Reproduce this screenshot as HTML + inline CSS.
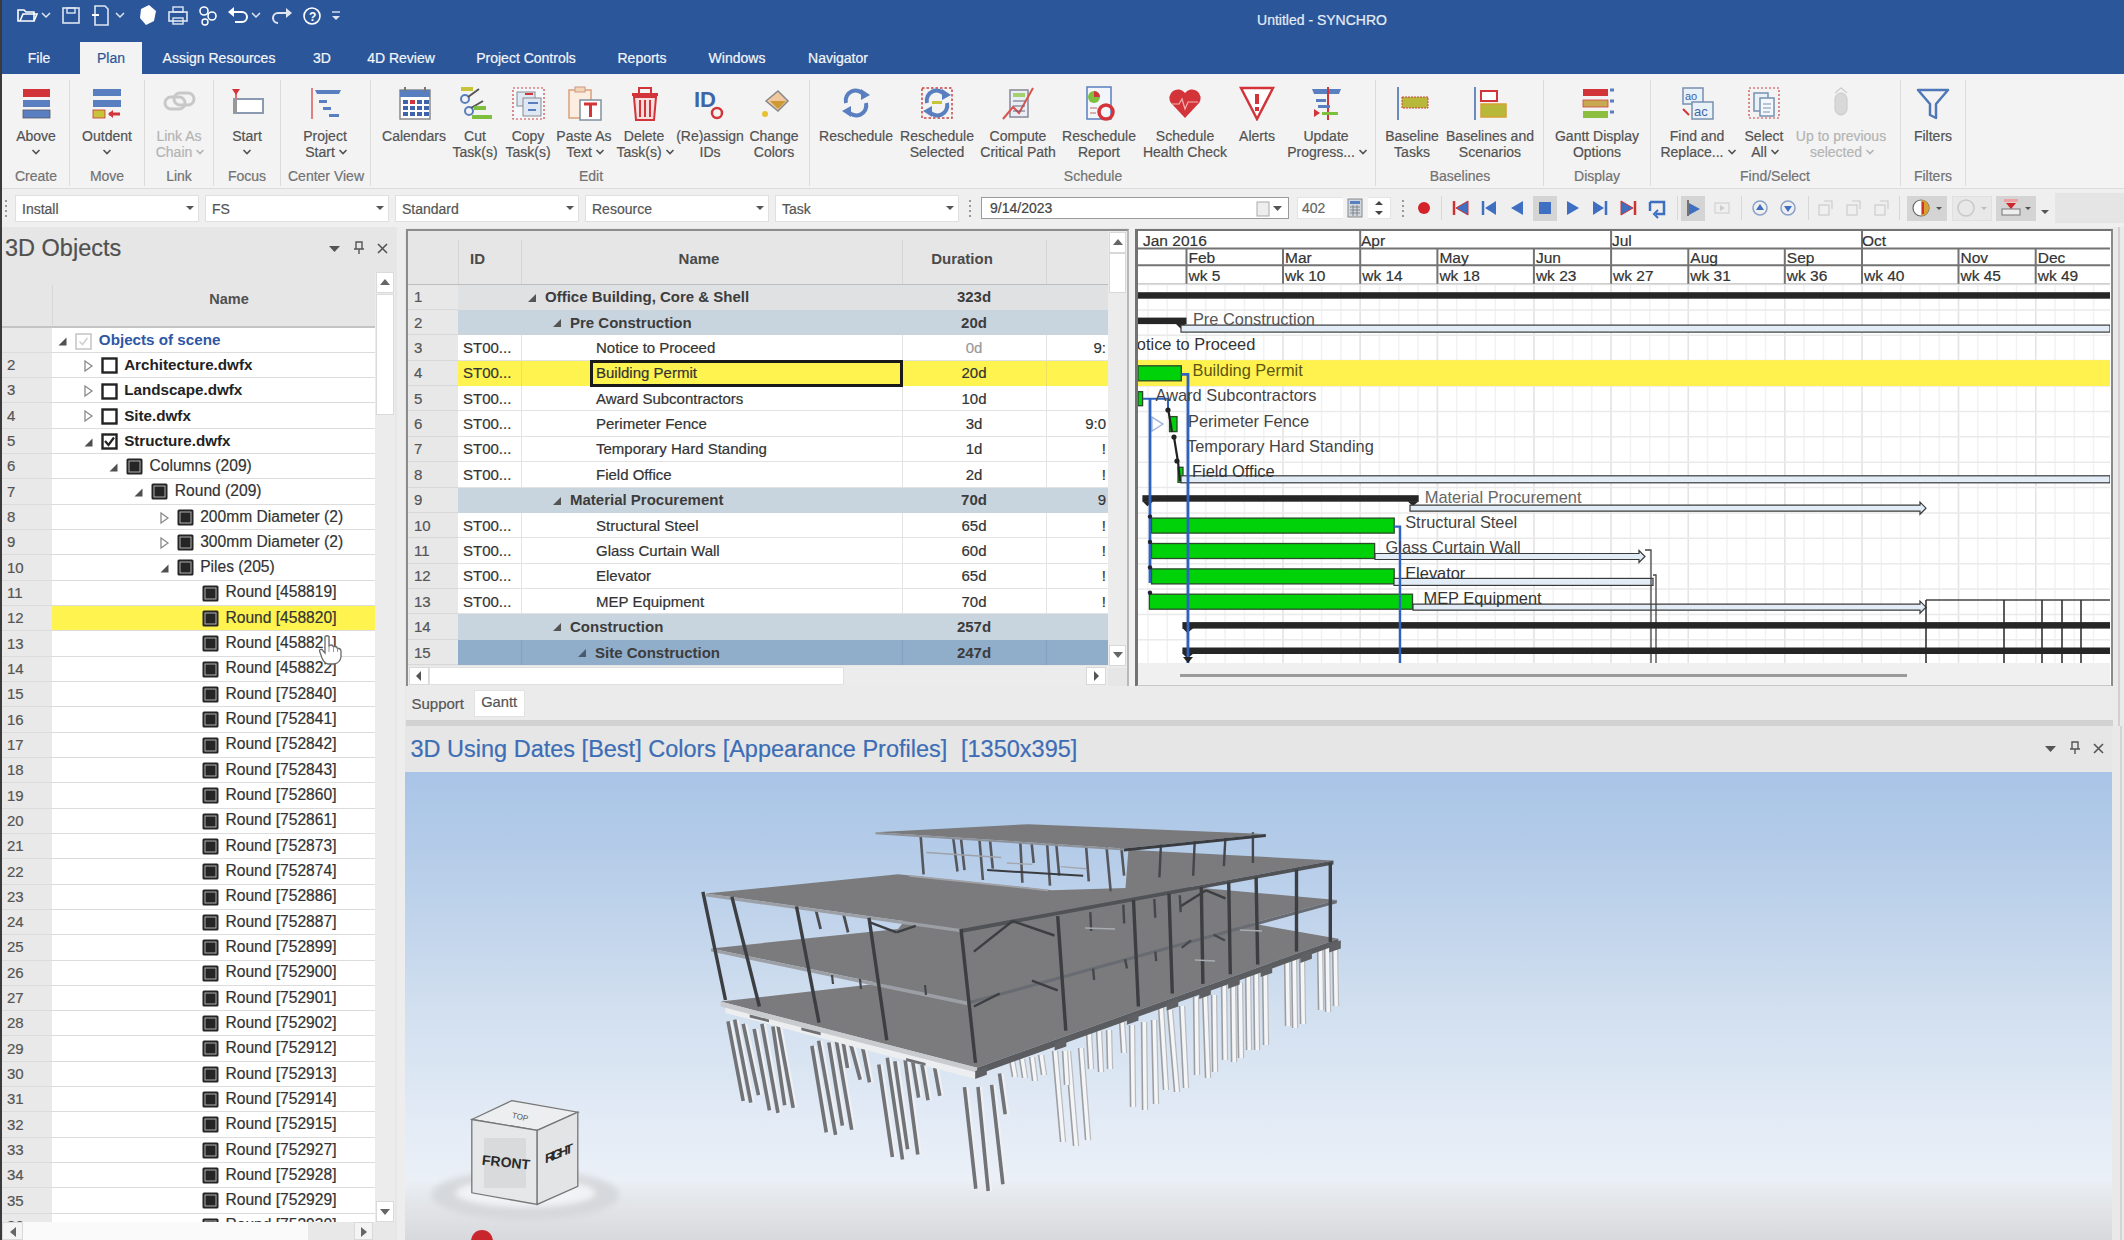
<!DOCTYPE html>
<html><head><meta charset="utf-8"><style>
html,body{margin:0;padding:0;width:2124px;height:1240px;overflow:hidden;background:#e6e6e6;}
body{position:relative;font-family:"Liberation Sans", sans-serif;}
div{position:absolute;box-sizing:border-box;}
.t{white-space:nowrap;line-height:1;}
.t.n{-webkit-text-stroke:0.2px currentColor;}
</style></head><body>
<div style="left:0px;top:0px;width:2124px;height:74px;background:#2b579a;"></div>
<div style="left:0px;top:0px;width:1.5px;height:1240px;background:#3a3a3a;z-index:50;"></div>
<div class="t n" style="left:922px;width:800px;text-align:center;top:12.75px;font-size:14px;color:#e6edf6;font-weight:normal;">Untitled - SYNCHRO</div>
<svg style="position:absolute;left:15px;top:3px;" width="24" height="26" viewBox="0 0 24 26"><path d="M3 7 L9 7 L11 9 L19 9 L19 18 L3 18 Z" fill="none" stroke="#fff" stroke-width="1.6"/><path d="M5 18 L8 11 L22 11 L19 18" fill="none" stroke="#fff" stroke-width="1.6"/></svg>
<svg style="position:absolute;left:60px;top:3px;" width="24" height="26" viewBox="0 0 24 26"><rect x="3" y="5" width="16" height="15" fill="none" stroke="#dfe6f2" stroke-width="1.6"/><rect x="7" y="5" width="8" height="5" fill="none" stroke="#dfe6f2" stroke-width="1.4"/></svg>
<svg style="position:absolute;left:90px;top:3px;" width="24" height="26" viewBox="0 0 24 26"><path d="M5 3 L15 3 L18 6 L18 22 L5 22 Z" fill="none" stroke="#dfe6f2" stroke-width="1.6"/><path d="M2 12 L9 12" stroke="#fff" stroke-width="2"/></svg>
<svg style="position:absolute;left:136px;top:3px;" width="24" height="26" viewBox="0 0 24 26"><path d="M5 6 L13 2 L20 8 L18 18 L10 22 L4 15 Z" fill="#fff"/></svg>
<svg style="position:absolute;left:166px;top:3px;" width="24" height="26" viewBox="0 0 24 26"><rect x="3" y="9" width="18" height="9" fill="none" stroke="#dfe6f2" stroke-width="1.6"/><rect x="7" y="4" width="10" height="5" fill="none" stroke="#dfe6f2" stroke-width="1.4"/><rect x="7" y="15" width="10" height="6" fill="none" stroke="#dfe6f2" stroke-width="1.4"/></svg>
<svg style="position:absolute;left:196px;top:3px;" width="24" height="26" viewBox="0 0 24 26"><circle cx="8" cy="8" r="4" fill="none" stroke="#fff" stroke-width="1.6"/><circle cx="16" cy="13" r="4" fill="none" stroke="#fff" stroke-width="1.6"/><circle cx="9" cy="19" r="3" fill="none" stroke="#fff" stroke-width="1.4"/></svg>
<svg style="position:absolute;left:226px;top:3px;" width="24" height="26" viewBox="0 0 24 26"><path d="M6 9 L16 9 A5 5 0 0 1 16 19 L9 19" fill="none" stroke="#fff" stroke-width="2"/><path d="M2 9 L8 4 L8 14 Z" fill="#fff"/></svg>
<svg style="position:absolute;left:270px;top:3px;" width="24" height="26" viewBox="0 0 24 26"><path d="M18 10 L8 10 A5 5 0 0 0 8 20" fill="none" stroke="#dfe6f2" stroke-width="2"/><path d="M22 10 L16 5 L16 15 Z" fill="#dfe6f2"/></svg>
<svg style="position:absolute;left:300px;top:3px;" width="24" height="26" viewBox="0 0 24 26"><circle cx="12" cy="13" r="8" fill="none" stroke="#fff" stroke-width="1.6"/><text x="9" y="18" font-family="Liberation Sans" font-size="12" font-weight="bold" fill="#fff">?</text></svg>
<svg style="position:absolute;left:40px;top:10px;" width="12" height="10" viewBox="0 0 12 10"><path d="M2 3 L6 7 L10 3" fill="none" stroke="#dfe6f2" stroke-width="1.5"/></svg>
<svg style="position:absolute;left:114px;top:10px;" width="12" height="10" viewBox="0 0 12 10"><path d="M2 3 L6 7 L10 3" fill="none" stroke="#dfe6f2" stroke-width="1.5"/></svg>
<svg style="position:absolute;left:250px;top:10px;" width="12" height="10" viewBox="0 0 12 10"><path d="M2 3 L6 7 L10 3" fill="none" stroke="#dfe6f2" stroke-width="1.5"/></svg>
<svg style="position:absolute;left:330px;top:9px;" width="12" height="14" viewBox="0 0 12 14"><path d="M2 3 L10 3" stroke="#dfe6f2" stroke-width="1.4"/><path d="M2 7 L6 11 L10 7 Z" fill="#dfe6f2"/></svg>
<div style="left:80px;top:42px;width:62px;height:33px;background:#f3f3f3;"></div>
<div class="t n" style="left:-361px;width:800px;text-align:center;top:51.15px;font-size:14px;color:#f4f6fa;font-weight:normal;">File</div>
<div class="t n" style="left:-289px;width:800px;text-align:center;top:51.15px;font-size:14px;color:#2b579a;font-weight:normal;">Plan</div>
<div class="t n" style="left:-181px;width:800px;text-align:center;top:51.15px;font-size:14px;color:#f4f6fa;font-weight:normal;">Assign Resources</div>
<div class="t n" style="left:-78px;width:800px;text-align:center;top:51.15px;font-size:14px;color:#f4f6fa;font-weight:normal;">3D</div>
<div class="t n" style="left:1px;width:800px;text-align:center;top:51.15px;font-size:14px;color:#f4f6fa;font-weight:normal;">4D Review</div>
<div class="t n" style="left:126px;width:800px;text-align:center;top:51.15px;font-size:14px;color:#f4f6fa;font-weight:normal;">Project Controls</div>
<div class="t n" style="left:242px;width:800px;text-align:center;top:51.15px;font-size:14px;color:#f4f6fa;font-weight:normal;">Reports</div>
<div class="t n" style="left:337px;width:800px;text-align:center;top:51.15px;font-size:14px;color:#f4f6fa;font-weight:normal;">Windows</div>
<div class="t n" style="left:438px;width:800px;text-align:center;top:51.15px;font-size:14px;color:#f4f6fa;font-weight:normal;">Navigator</div>
<div style="left:0px;top:74px;width:2124px;height:115px;background:#f3f3f3;"></div>
<div style="left:0px;top:188px;width:2124px;height:1px;background:#dcdcdc;"></div>
<div style="left:69px;top:80px;width:1px;height:106px;background:#dcdcdc;"></div>
<div style="left:144px;top:80px;width:1px;height:106px;background:#dcdcdc;"></div>
<div style="left:213px;top:80px;width:1px;height:106px;background:#dcdcdc;"></div>
<div style="left:280px;top:80px;width:1px;height:106px;background:#dcdcdc;"></div>
<div style="left:370px;top:80px;width:1px;height:106px;background:#dcdcdc;"></div>
<div style="left:809px;top:80px;width:1px;height:106px;background:#dcdcdc;"></div>
<div style="left:1375px;top:80px;width:1px;height:106px;background:#dcdcdc;"></div>
<div style="left:1543px;top:80px;width:1px;height:106px;background:#dcdcdc;"></div>
<div style="left:1650px;top:80px;width:1px;height:106px;background:#dcdcdc;"></div>
<div style="left:1900px;top:80px;width:1px;height:106px;background:#dcdcdc;"></div>
<div style="left:1965px;top:80px;width:1px;height:106px;background:#dcdcdc;"></div>
<svg style="position:absolute;left:18px;top:85px;" width="36" height="36" viewBox="0 0 36 36"><rect x="5" y="4" width="27" height="8" fill="#d2343a"/><rect x="5" y="15" width="27" height="7" fill="#5a7fc0"/><rect x="5" y="25" width="27" height="8" fill="#5a7fc0"/><rect x="5" y="25" width="27" height="8" fill="none" stroke="#556" stroke-width="0.8"/></svg>
<div class="t n" style="left:-364px;width:800px;text-align:center;top:128.65px;font-size:14px;color:#525252;font-weight:normal;">Above</div>
<svg style="position:absolute;left:31px;top:148px;" width="10" height="8" viewBox="0 0 10 8"><path d="M1.5 2 L5 5.5 L8.5 2" fill="none" stroke="#525252" stroke-width="1.6"/></svg>
<svg style="position:absolute;left:89px;top:85px;" width="36" height="36" viewBox="0 0 36 36"><rect x="4" y="4" width="28" height="7" fill="#5a7fc0"/><rect x="4" y="15" width="28" height="7" fill="#5a7fc0"/><rect x="4" y="25" width="12" height="8" fill="#c8c43a" stroke="#c33" stroke-width="0.8"/><path d="M20 29 L31 29" stroke="#d2343a" stroke-width="3"/><path d="M19 29 L24 25 L24 33 Z" fill="#d2343a"/></svg>
<div class="t n" style="left:-293px;width:800px;text-align:center;top:128.65px;font-size:14px;color:#525252;font-weight:normal;">Outdent</div>
<svg style="position:absolute;left:102px;top:148px;" width="10" height="8" viewBox="0 0 10 8"><path d="M1.5 2 L5 5.5 L8.5 2" fill="none" stroke="#525252" stroke-width="1.6"/></svg>
<svg style="position:absolute;left:161px;top:85px;" width="36" height="36" viewBox="0 0 36 36"><rect x="4" y="12" width="20" height="12" rx="6" fill="none" stroke="#c8c8c8" stroke-width="3"/><rect x="13" y="8" width="20" height="12" rx="6" fill="none" stroke="#c8c8c8" stroke-width="3"/></svg>
<div class="t n" style="left:-221px;width:800px;text-align:center;top:128.65px;font-size:14px;color:#b4b4b4;font-weight:normal;">Link As</div>
<div class="t n" style="left:-226px;width:800px;text-align:center;top:145.15px;font-size:14px;color:#b4b4b4;font-weight:normal;">Chain</div>
<svg style="position:absolute;left:195.28125px;top:148px;" width="10" height="8" viewBox="0 0 10 8"><path d="M1.5 2 L5 5.5 L8.5 2" fill="none" stroke="#b4b4b4" stroke-width="1.6"/></svg>
<svg style="position:absolute;left:229px;top:85px;" width="36" height="36" viewBox="0 0 36 36"><rect x="5" y="14" width="29" height="14" fill="#fff" stroke="#8a9ab0" stroke-width="2"/><path d="M7 4 L7 28" stroke="#e07070" stroke-width="2"/><path d="M3 4 L11 4 L7 10 Z" fill="#d2343a"/><rect x="5" y="14" width="3" height="14" fill="#999"/></svg>
<div class="t n" style="left:-153px;width:800px;text-align:center;top:128.65px;font-size:14px;color:#525252;font-weight:normal;">Start</div>
<svg style="position:absolute;left:242px;top:148px;" width="10" height="8" viewBox="0 0 10 8"><path d="M1.5 2 L5 5.5 L8.5 2" fill="none" stroke="#525252" stroke-width="1.6"/></svg>
<svg style="position:absolute;left:307px;top:85px;" width="36" height="36" viewBox="0 0 36 36"><path d="M5 3 L5 34" stroke="#e08080" stroke-width="2"/><path d="M8 5 L34 5 L32 9 L10 9 Z" fill="#5a7fc0"/><rect x="12" y="15" width="8" height="3" fill="#5a7fc0"/><rect x="16" y="22" width="8" height="3" fill="#5a7fc0"/><rect x="22" y="29" width="10" height="3" fill="#5a7fc0"/></svg>
<div class="t n" style="left:-75px;width:800px;text-align:center;top:128.65px;font-size:14px;color:#525252;font-weight:normal;">Project</div>
<div class="t n" style="left:-80px;width:800px;text-align:center;top:145.15px;font-size:14px;color:#525252;font-weight:normal;">Start</div>
<svg style="position:absolute;left:337.78125px;top:148px;" width="10" height="8" viewBox="0 0 10 8"><path d="M1.5 2 L5 5.5 L8.5 2" fill="none" stroke="#525252" stroke-width="1.6"/></svg>
<svg style="position:absolute;left:396px;top:85px;" width="36" height="36" viewBox="0 0 36 36"><rect x="4" y="5" width="30" height="29" fill="#fff" stroke="#8a8a8a" stroke-width="1.5"/><rect x="4" y="5" width="30" height="7" fill="#5a7fc0"/><path d="M9 2 L9 7 M29 2 L29 7" stroke="#777" stroke-width="2"/><rect x="7" y="15" width="5" height="4" fill="#3f64a8"/><rect x="14" y="15" width="5" height="4" fill="#d2343a"/><rect x="21" y="15" width="5" height="4" fill="#3f64a8"/><rect x="28" y="15" width="5" height="4" fill="#3f64a8"/><rect x="7" y="21" width="5" height="4" fill="#3f64a8"/><rect x="14" y="21" width="5" height="4" fill="#3f64a8"/><rect x="21" y="21" width="5" height="4" fill="#3f64a8"/><rect x="28" y="21" width="5" height="4" fill="#3f64a8"/><rect x="7" y="27" width="5" height="4" fill="#3f64a8"/><rect x="14" y="27" width="5" height="4" fill="#3f64a8"/><rect x="21" y="27" width="5" height="4" fill="#3f64a8"/><rect x="28" y="27" width="5" height="4" fill="#3f64a8"/></svg>
<div class="t n" style="left:14px;width:800px;text-align:center;top:128.65px;font-size:14px;color:#525252;font-weight:normal;">Calendars</div>
<svg style="position:absolute;left:457px;top:85px;" width="36" height="36" viewBox="0 0 36 36"><circle cx="8" cy="14" r="4" fill="none" stroke="#5a7fc0" stroke-width="2"/><circle cx="12" cy="26" r="4" fill="none" stroke="#5a7fc0" stroke-width="2"/><path d="M11 12 L22 4 M14 23 L26 16" stroke="#555" stroke-width="2"/><rect x="4" y="2" width="12" height="4" fill="#c8c43a"/><rect x="17" y="21" width="12" height="4" fill="#7fbf3f"/><rect x="15" y="30" width="20" height="4" fill="#7fbf3f"/></svg>
<div class="t n" style="left:75px;width:800px;text-align:center;top:128.65px;font-size:14px;color:#525252;font-weight:normal;">Cut</div>
<div class="t n" style="left:75px;width:800px;text-align:center;top:145.15px;font-size:14px;color:#525252;font-weight:normal;">Task(s)</div>
<svg style="position:absolute;left:510px;top:85px;" width="36" height="36" viewBox="0 0 36 36"><rect x="3" y="3" width="31" height="31" fill="#f4f8fc" stroke="#c44" stroke-width="1.2" stroke-dasharray="2 2"/><rect x="7" y="7" width="18" height="14" fill="#dde8f4" stroke="#8a8a8a"/><rect x="13" y="13" width="18" height="18" fill="#dde8f4" stroke="#8a8a8a"/><rect x="15" y="8" width="8" height="2" fill="#d2343a"/><rect x="18" y="17" width="10" height="2" fill="#5a7fc0"/><rect x="18" y="24" width="8" height="2" fill="#5a7fc0"/></svg>
<div class="t n" style="left:128px;width:800px;text-align:center;top:128.65px;font-size:14px;color:#525252;font-weight:normal;">Copy</div>
<div class="t n" style="left:128px;width:800px;text-align:center;top:145.15px;font-size:14px;color:#525252;font-weight:normal;">Task(s)</div>
<svg style="position:absolute;left:566px;top:85px;" width="36" height="36" viewBox="0 0 36 36"><rect x="3" y="5" width="22" height="28" fill="#fbeee0" stroke="#d9a07a" stroke-width="1.5"/><rect x="9" y="2" width="10" height="5" fill="#f3d5b5" stroke="#c98" stroke-width="1"/><rect x="14" y="15" width="21" height="20" fill="#fff" stroke="#8090a0" stroke-width="1.5"/><path d="M18 19 L31 19 M24.5 19 L24.5 32" stroke="#d2343a" stroke-width="3"/></svg>
<div class="t n" style="left:184px;width:800px;text-align:center;top:128.65px;font-size:14px;color:#525252;font-weight:normal;">Paste As</div>
<div class="t n" style="left:179px;width:800px;text-align:center;top:145.15px;font-size:14px;color:#525252;font-weight:normal;">Text</div>
<svg style="position:absolute;left:594.8359375px;top:148px;" width="10" height="8" viewBox="0 0 10 8"><path d="M1.5 2 L5 5.5 L8.5 2" fill="none" stroke="#525252" stroke-width="1.6"/></svg>
<svg style="position:absolute;left:626px;top:85px;" width="36" height="36" viewBox="0 0 36 36"><rect x="6" y="8" width="26" height="3" fill="#d2343a"/><rect x="13" y="3" width="12" height="6" fill="none" stroke="#d2343a" stroke-width="2"/><path d="M8 12 L10 35 L28 35 L30 12 Z" fill="#f6dede" stroke="#d2343a" stroke-width="2"/><path d="M14 15 L14 32 M19 15 L19 32 M24 15 L24 32" stroke="#d2343a" stroke-width="2"/></svg>
<div class="t n" style="left:244px;width:800px;text-align:center;top:128.65px;font-size:14px;color:#525252;font-weight:normal;">Delete</div>
<div class="t n" style="left:239px;width:800px;text-align:center;top:145.15px;font-size:14px;color:#525252;font-weight:normal;">Task(s)</div>
<svg style="position:absolute;left:664.546875px;top:148px;" width="10" height="8" viewBox="0 0 10 8"><path d="M1.5 2 L5 5.5 L8.5 2" fill="none" stroke="#525252" stroke-width="1.6"/></svg>
<svg style="position:absolute;left:692px;top:85px;" width="36" height="36" viewBox="0 0 36 36"><text x="2" y="22" font-family="Liberation Sans" font-weight="bold" font-size="22" fill="#3f64a8">ID</text><circle cx="25" cy="28" r="5" fill="none" stroke="#d2343a" stroke-width="2.5"/></svg>
<div class="t n" style="left:310px;width:800px;text-align:center;top:128.65px;font-size:14px;color:#525252;font-weight:normal;">(Re)assign</div>
<div class="t n" style="left:310px;width:800px;text-align:center;top:145.15px;font-size:14px;color:#525252;font-weight:normal;">IDs</div>
<svg style="position:absolute;left:756px;top:85px;" width="36" height="36" viewBox="0 0 36 36"><path d="M10 16 L22 6 L32 16 L22 26 Z" fill="#f0c8a0" stroke="#888" stroke-width="1.5"/><path d="M14 16 L30 16 L22 24 Z" fill="#c93"/><circle cx="9" cy="29" r="3" fill="#e8c030"/></svg>
<div class="t n" style="left:374px;width:800px;text-align:center;top:128.65px;font-size:14px;color:#525252;font-weight:normal;">Change</div>
<div class="t n" style="left:374px;width:800px;text-align:center;top:145.15px;font-size:14px;color:#525252;font-weight:normal;">Colors</div>
<svg style="position:absolute;left:838px;top:85px;" width="36" height="36" viewBox="0 0 36 36"><path d="M8 18 A10 10 0 0 1 26 10" fill="none" stroke="#5a7fc0" stroke-width="4"/><path d="M28 18 A10 10 0 0 1 10 26" fill="none" stroke="#5a7fc0" stroke-width="4"/><path d="M23 4 L32 10 L23 15 Z" fill="#5a7fc0"/><path d="M13 32 L4 26 L13 21 Z" fill="#5a7fc0"/></svg>
<div class="t n" style="left:456px;width:800px;text-align:center;top:128.65px;font-size:14px;color:#525252;font-weight:normal;">Reschedule</div>
<svg style="position:absolute;left:919px;top:85px;" width="36" height="36" viewBox="0 0 36 36"><rect x="3" y="3" width="30" height="30" fill="none" stroke="#c44" stroke-width="1.5" stroke-dasharray="2.5 2"/><path d="M8 18 A10 10 0 0 1 26 10" fill="none" stroke="#5a7fc0" stroke-width="4"/><path d="M28 18 A10 10 0 0 1 10 26" fill="none" stroke="#5a7fc0" stroke-width="4"/><path d="M23 4 L32 10 L23 15 Z" fill="#5a7fc0"/><path d="M13 32 L4 26 L13 21 Z" fill="#5a7fc0"/><rect x="13" y="16" width="10" height="3" fill="#c8c43a"/></svg>
<div class="t n" style="left:537px;width:800px;text-align:center;top:128.65px;font-size:14px;color:#525252;font-weight:normal;">Reschedule</div>
<div class="t n" style="left:537px;width:800px;text-align:center;top:145.15px;font-size:14px;color:#525252;font-weight:normal;">Selected</div>
<svg style="position:absolute;left:1000px;top:85px;" width="36" height="36" viewBox="0 0 36 36"><rect x="10" y="5" width="18" height="27" fill="#e8eef4" stroke="#889" stroke-width="1.5"/><rect x="13" y="8" width="12" height="4" fill="#a4d070"/><path d="M3 34 L13 22 L19 28 L33 3" fill="none" stroke="#d9534f" stroke-width="2"/><path d="M13 16 L25 16 M13 21 L25 21 M13 26 L25 26" stroke="#667" stroke-width="1"/></svg>
<div class="t n" style="left:618px;width:800px;text-align:center;top:128.65px;font-size:14px;color:#525252;font-weight:normal;">Compute</div>
<div class="t n" style="left:618px;width:800px;text-align:center;top:145.15px;font-size:14px;color:#525252;font-weight:normal;">Critical Path</div>
<svg style="position:absolute;left:1081px;top:85px;" width="36" height="36" viewBox="0 0 36 36"><rect x="6" y="2" width="24" height="32" fill="#f2f6fa" stroke="#5a7fc0" stroke-width="1.5"/><circle cx="13" cy="12" r="6" fill="#7fbf3f"/><path d="M13 12 L13 6 A6 6 0 0 1 19 12 Z" fill="#d2343a"/><circle cx="25" cy="27" r="7" fill="none" stroke="#d2343a" stroke-width="3.5"/><path d="M9 23 L16 23 M9 28 L15 28" stroke="#c99" stroke-width="1.5"/></svg>
<div class="t n" style="left:699px;width:800px;text-align:center;top:128.65px;font-size:14px;color:#525252;font-weight:normal;">Reschedule</div>
<div class="t n" style="left:699px;width:800px;text-align:center;top:145.15px;font-size:14px;color:#525252;font-weight:normal;">Report</div>
<svg style="position:absolute;left:1167px;top:85px;" width="36" height="36" viewBox="0 0 36 36"><path d="M18 33 L4 18 A8 8 0 0 1 18 8 A8 8 0 0 1 32 18 Z" fill="#d2343a"/><path d="M5 19 L12 19 L15 14 L18 24 L21 17 L31 17" fill="none" stroke="#f4b4b4" stroke-width="1.2"/></svg>
<div class="t n" style="left:785px;width:800px;text-align:center;top:128.65px;font-size:14px;color:#525252;font-weight:normal;">Schedule</div>
<div class="t n" style="left:785px;width:800px;text-align:center;top:145.15px;font-size:14px;color:#525252;font-weight:normal;">Health Check</div>
<svg style="position:absolute;left:1239px;top:85px;" width="36" height="36" viewBox="0 0 36 36"><path d="M2 3 L34 3 L18 34 Z" fill="#fff" stroke="#d2343a" stroke-width="2.5"/><rect x="16" y="9" width="4" height="10" fill="#d2343a"/><rect x="16" y="22" width="4" height="4" fill="#d2343a"/></svg>
<div class="t n" style="left:857px;width:800px;text-align:center;top:128.65px;font-size:14px;color:#525252;font-weight:normal;">Alerts</div>
<svg style="position:absolute;left:1308px;top:85px;" width="36" height="36" viewBox="0 0 36 36"><path d="M4 4 L33 4 L31 9 L6 9 Z" fill="#5a7fc0"/><path d="M20 2 L20 35" stroke="#d2343a" stroke-width="2"/><rect x="8" y="14" width="10" height="3" fill="#5a7fc0"/><rect x="10" y="20" width="12" height="3" fill="#5a7fc0"/><rect x="14" y="27" width="16" height="3" fill="#7fbf3f"/><path d="M6 24 L12 28 L6 32 Z" fill="#d2343a"/></svg>
<div class="t n" style="left:926px;width:800px;text-align:center;top:128.65px;font-size:14px;color:#525252;font-weight:normal;">Update</div>
<div class="t n" style="left:921px;width:800px;text-align:center;top:145.15px;font-size:14px;color:#525252;font-weight:normal;">Progress...</div>
<svg style="position:absolute;left:1357.8359375px;top:148px;" width="10" height="8" viewBox="0 0 10 8"><path d="M1.5 2 L5 5.5 L8.5 2" fill="none" stroke="#525252" stroke-width="1.6"/></svg>
<svg style="position:absolute;left:1394px;top:85px;" width="36" height="36" viewBox="0 0 36 36"><path d="M4 2 L4 35" stroke="#6a8ac0" stroke-width="2"/><rect x="8" y="12" width="26" height="11" fill="#b8b83a" stroke="#c44" stroke-width="1" stroke-dasharray="2 1"/></svg>
<div class="t n" style="left:1012px;width:800px;text-align:center;top:128.65px;font-size:14px;color:#525252;font-weight:normal;">Baseline</div>
<div class="t n" style="left:1012px;width:800px;text-align:center;top:145.15px;font-size:14px;color:#525252;font-weight:normal;">Tasks</div>
<svg style="position:absolute;left:1472px;top:85px;" width="36" height="36" viewBox="0 0 36 36"><path d="M3 2 L3 35" stroke="#6a8ac0" stroke-width="2"/><rect x="9" y="6" width="16" height="10" fill="#fff" stroke="#d2343a" stroke-width="2"/><rect x="9" y="19" width="25" height="13" fill="#b8b83a" stroke="#d9a030" stroke-width="1.5"/></svg>
<div class="t n" style="left:1090px;width:800px;text-align:center;top:128.65px;font-size:14px;color:#525252;font-weight:normal;">Baselines and</div>
<div class="t n" style="left:1090px;width:800px;text-align:center;top:145.15px;font-size:14px;color:#525252;font-weight:normal;">Scenarios</div>
<svg style="position:absolute;left:1579px;top:85px;" width="36" height="36" viewBox="0 0 36 36"><rect x="4" y="4" width="25" height="7" fill="#d2343a"/><rect x="4" y="15" width="25" height="7" fill="#c8a850" stroke="#c44" stroke-width="0.8"/><rect x="4" y="26" width="25" height="7" fill="#8cbf3f"/><path d="M31 5 L35 5 M31 16 L35 16 M31 27 L35 27" stroke="#5a7fc0" stroke-width="3"/></svg>
<div class="t n" style="left:1197px;width:800px;text-align:center;top:128.65px;font-size:14px;color:#525252;font-weight:normal;">Gantt Display</div>
<div class="t n" style="left:1197px;width:800px;text-align:center;top:145.15px;font-size:14px;color:#525252;font-weight:normal;">Options</div>
<svg style="position:absolute;left:1679px;top:85px;" width="36" height="36" viewBox="0 0 36 36"><rect x="4" y="3" width="20" height="16" fill="#e8f0f8" stroke="#7890b0" stroke-width="1.5"/><rect x="13" y="17" width="21" height="17" fill="#e8f0f8" stroke="#7890b0" stroke-width="1.5"/><text x="6" y="15" font-family="Liberation Sans" font-size="11" fill="#3f64a8">ao</text><text x="15" y="31" font-family="Liberation Sans" font-size="13" fill="#3f64a8">ac</text><path d="M4 24 L10 30" stroke="#d2343a" stroke-width="2"/></svg>
<div class="t n" style="left:1297px;width:800px;text-align:center;top:128.65px;font-size:14px;color:#525252;font-weight:normal;">Find and</div>
<div class="t n" style="left:1292px;width:800px;text-align:center;top:145.15px;font-size:14px;color:#525252;font-weight:normal;">Replace...</div>
<svg style="position:absolute;left:1726.5078125px;top:148px;" width="10" height="8" viewBox="0 0 10 8"><path d="M1.5 2 L5 5.5 L8.5 2" fill="none" stroke="#525252" stroke-width="1.6"/></svg>
<svg style="position:absolute;left:1746px;top:85px;" width="36" height="36" viewBox="0 0 36 36"><rect x="3" y="3" width="30" height="30" fill="none" stroke="#c44" stroke-width="1.2" stroke-dasharray="2 2"/><rect x="8" y="8" width="14" height="18" fill="#e8f0f8" stroke="#7890b0" stroke-width="1.5"/><rect x="14" y="13" width="14" height="18" fill="#f4f8fc" stroke="#7890b0" stroke-width="1.5"/><path d="M17 19 L25 19 M17 23 L25 23 M17 27 L24 27" stroke="#7890b0" stroke-width="1.2"/></svg>
<div class="t n" style="left:1364px;width:800px;text-align:center;top:128.65px;font-size:14px;color:#525252;font-weight:normal;">Select</div>
<div class="t n" style="left:1359px;width:800px;text-align:center;top:145.15px;font-size:14px;color:#525252;font-weight:normal;">All</div>
<svg style="position:absolute;left:1769.78125px;top:148px;" width="10" height="8" viewBox="0 0 10 8"><path d="M1.5 2 L5 5.5 L8.5 2" fill="none" stroke="#525252" stroke-width="1.6"/></svg>
<svg style="position:absolute;left:1823px;top:85px;" width="36" height="36" viewBox="0 0 36 36"><rect x="12" y="8" width="12" height="22" rx="6" fill="#d8d8d8" stroke="#c8c8c8"/><path d="M12 8 L18 3 L24 8" fill="none" stroke="#d0d0d0" stroke-width="1.5"/></svg>
<div class="t n" style="left:1441px;width:800px;text-align:center;top:128.65px;font-size:14px;color:#b4b4b4;font-weight:normal;">Up to previous</div>
<div class="t n" style="left:1436px;width:800px;text-align:center;top:145.15px;font-size:14px;color:#b4b4b4;font-weight:normal;">selected</div>
<svg style="position:absolute;left:1865.0625px;top:148px;" width="10" height="8" viewBox="0 0 10 8"><path d="M1.5 2 L5 5.5 L8.5 2" fill="none" stroke="#b4b4b4" stroke-width="1.6"/></svg>
<svg style="position:absolute;left:1915px;top:85px;" width="36" height="36" viewBox="0 0 36 36"><path d="M3 5 L33 5 L21 19 L21 33 L15 30 L15 19 Z" fill="none" stroke="#4f78b8" stroke-width="2.5" stroke-linejoin="round"/></svg>
<div class="t n" style="left:1533px;width:800px;text-align:center;top:128.65px;font-size:14px;color:#525252;font-weight:normal;">Filters</div>
<div class="t n" style="left:-364px;width:800px;text-align:center;top:169.15px;font-size:14px;color:#727272;font-weight:normal;">Create</div>
<div class="t n" style="left:-293px;width:800px;text-align:center;top:169.15px;font-size:14px;color:#727272;font-weight:normal;">Move</div>
<div class="t n" style="left:-221px;width:800px;text-align:center;top:169.15px;font-size:14px;color:#727272;font-weight:normal;">Link</div>
<div class="t n" style="left:-153px;width:800px;text-align:center;top:169.15px;font-size:14px;color:#727272;font-weight:normal;">Focus</div>
<div class="t n" style="left:-74px;width:800px;text-align:center;top:169.15px;font-size:14px;color:#727272;font-weight:normal;">Center View</div>
<div class="t n" style="left:191px;width:800px;text-align:center;top:169.15px;font-size:14px;color:#727272;font-weight:normal;">Edit</div>
<div class="t n" style="left:693px;width:800px;text-align:center;top:169.15px;font-size:14px;color:#727272;font-weight:normal;">Schedule</div>
<div class="t n" style="left:1060px;width:800px;text-align:center;top:169.15px;font-size:14px;color:#727272;font-weight:normal;">Baselines</div>
<div class="t n" style="left:1197px;width:800px;text-align:center;top:169.15px;font-size:14px;color:#727272;font-weight:normal;">Display</div>
<div class="t n" style="left:1375px;width:800px;text-align:center;top:169.15px;font-size:14px;color:#727272;font-weight:normal;">Find/Select</div>
<div class="t n" style="left:1533px;width:800px;text-align:center;top:169.15px;font-size:14px;color:#727272;font-weight:normal;">Filters</div>
<div style="left:0px;top:189px;width:2124px;height:39px;background:#efefef;"></div>
<svg style="position:absolute;left:4px;top:198px;" width="4" height="22" viewBox="0 0 4 22"><rect x="1" y="2" width="2" height="2" fill="#999"/><rect x="1" y="7" width="2" height="2" fill="#999"/><rect x="1" y="12" width="2" height="2" fill="#999"/><rect x="1" y="17" width="2" height="2" fill="#999"/></svg>
<svg style="position:absolute;left:968px;top:198px;" width="4" height="22" viewBox="0 0 4 22"><rect x="1" y="2" width="2" height="2" fill="#999"/><rect x="1" y="7" width="2" height="2" fill="#999"/><rect x="1" y="12" width="2" height="2" fill="#999"/><rect x="1" y="17" width="2" height="2" fill="#999"/></svg>
<svg style="position:absolute;left:1401px;top:198px;" width="4" height="22" viewBox="0 0 4 22"><rect x="1" y="2" width="2" height="2" fill="#999"/><rect x="1" y="7" width="2" height="2" fill="#999"/><rect x="1" y="12" width="2" height="2" fill="#999"/><rect x="1" y="17" width="2" height="2" fill="#999"/></svg>
<div style="left:15px;top:195px;width:184px;height:27px;background:#fff;border:1px solid #e0e0e0;"></div>
<div class="t n" style="left:22px;top:202.15px;font-size:14px;color:#555;font-weight:normal;">Install</div>
<svg style="position:absolute;left:185px;top:205px;" width="10" height="6" viewBox="0 0 10 6"><path d="M1 1 L9 1 L5 5 Z" fill="#555"/></svg>
<div style="left:205px;top:195px;width:184px;height:27px;background:#fff;border:1px solid #e0e0e0;"></div>
<div class="t n" style="left:212px;top:202.15px;font-size:14px;color:#555;font-weight:normal;">FS</div>
<svg style="position:absolute;left:375px;top:205px;" width="10" height="6" viewBox="0 0 10 6"><path d="M1 1 L9 1 L5 5 Z" fill="#555"/></svg>
<div style="left:395px;top:195px;width:184px;height:27px;background:#fff;border:1px solid #e0e0e0;"></div>
<div class="t n" style="left:402px;top:202.15px;font-size:14px;color:#555;font-weight:normal;">Standard</div>
<svg style="position:absolute;left:565px;top:205px;" width="10" height="6" viewBox="0 0 10 6"><path d="M1 1 L9 1 L5 5 Z" fill="#555"/></svg>
<div style="left:585px;top:195px;width:184px;height:27px;background:#fff;border:1px solid #e0e0e0;"></div>
<div class="t n" style="left:592px;top:202.15px;font-size:14px;color:#555;font-weight:normal;">Resource</div>
<svg style="position:absolute;left:755px;top:205px;" width="10" height="6" viewBox="0 0 10 6"><path d="M1 1 L9 1 L5 5 Z" fill="#555"/></svg>
<div style="left:775px;top:195px;width:184px;height:27px;background:#fff;border:1px solid #e0e0e0;"></div>
<div class="t n" style="left:782px;top:202.15px;font-size:14px;color:#555;font-weight:normal;">Task</div>
<svg style="position:absolute;left:945px;top:205px;" width="10" height="6" viewBox="0 0 10 6"><path d="M1 1 L9 1 L5 5 Z" fill="#555"/></svg>
<div style="left:981px;top:197px;width:308px;height:22px;background:#fff;border:1px solid #9a9a9a;"></div>
<div class="t n" style="left:990px;top:201.15px;font-size:14px;color:#444;font-weight:normal;">9/14/2023</div>
<svg style="position:absolute;left:1255px;top:200px;" width="34" height="18" viewBox="0 0 34 18"><rect x="2" y="2" width="12" height="14" fill="#eee" stroke="#aaa"/><path d="M18 6 L27 6 L22.5 11 Z" fill="#555"/></svg>
<div style="left:1297px;top:197px;width:94px;height:22px;background:#fff;border:1px solid #e4e4e4;"></div>
<div class="t n" style="left:1302px;top:201.15px;font-size:14px;color:#666;font-weight:normal;">402</div>
<div style="left:1343px;top:197px;width:25px;height:22px;background:#f3f3f3;"></div>
<svg style="position:absolute;left:1346px;top:198px;" width="18" height="20" viewBox="0 0 18 20"><rect x="2" y="1" width="14" height="18" fill="#cfd8e0" stroke="#888"/><rect x="4" y="3" width="10" height="3" fill="#5a7fc0"/><path d="M4 9 L14 9 M4 12 L14 12 M4 15 L14 15 M7 7 L7 18 M11 7 L11 18" stroke="#777" stroke-width="0.8"/></svg>
<svg style="position:absolute;left:1372px;top:199px;" width="14" height="18" viewBox="0 0 14 18"><path d="M3 6 L7 2 L11 6 Z" fill="#444"/><path d="M3 12 L7 16 L11 12 Z" fill="#444"/></svg>
<svg style="position:absolute;left:1413px;top:197px;" width="22" height="22" viewBox="0 0 22 22"><circle cx="11" cy="11" r="6" fill="#d2242a"/></svg>
<div style="left:1441px;top:196px;width:1px;height:24px;background:#d8d8d8;"></div>
<svg style="position:absolute;left:1450px;top:197px;" width="22" height="22" viewBox="0 0 22 22"><path d="M4 4 L4 18" stroke="#c33" stroke-width="2.5"/><path d="M18 4 L6 11 L18 18 Z" fill="#3f6fc0" stroke="#c33" stroke-width="1"/></svg>
<svg style="position:absolute;left:1478px;top:197px;" width="22" height="22" viewBox="0 0 22 22"><path d="M5 4 L5 18" stroke="#3f6fc0" stroke-width="2.5"/><path d="M18 4 L7 11 L18 18 Z" fill="#3f6fc0"/></svg>
<svg style="position:absolute;left:1506px;top:197px;" width="22" height="22" viewBox="0 0 22 22"><path d="M17 4 L5 11 L17 18 Z" fill="#3f6fc0"/></svg>
<div style="left:1533px;top:196px;width:24px;height:25px;background:#d4d4d4;"></div>
<svg style="position:absolute;left:1534px;top:197px;" width="22" height="22" viewBox="0 0 22 22"><rect x="5" y="5" width="12" height="12" fill="#3f6fc0"/></svg>
<svg style="position:absolute;left:1562px;top:197px;" width="22" height="22" viewBox="0 0 22 22"><path d="M5 4 L17 11 L5 18 Z" fill="#3f6fc0"/></svg>
<svg style="position:absolute;left:1589px;top:197px;" width="22" height="22" viewBox="0 0 22 22"><path d="M17 4 L17 18" stroke="#3f6fc0" stroke-width="2.5"/><path d="M4 4 L15 11 L4 18 Z" fill="#3f6fc0"/></svg>
<svg style="position:absolute;left:1617px;top:197px;" width="22" height="22" viewBox="0 0 22 22"><path d="M18 4 L18 18" stroke="#c33" stroke-width="2.5"/><path d="M4 4 L16 11 L4 18 Z" fill="#3f6fc0" stroke="#c33" stroke-width="1"/></svg>
<svg style="position:absolute;left:1646px;top:197px;" width="22" height="22" viewBox="0 0 22 22"><path d="M4 5 L18 5 L18 17 L10 17" fill="none" stroke="#3f6fc0" stroke-width="2.5"/><path d="M4 5 L4 14" stroke="#3f6fc0" stroke-width="2.5"/><path d="M12 13 L8 17 L12 21" fill="none" stroke="#3f6fc0" stroke-width="2"/></svg>
<div style="left:1677px;top:196px;width:1px;height:24px;background:#d8d8d8;"></div>
<div style="left:1681px;top:196px;width:24px;height:25px;background:#d4d4d4;"></div>
<svg style="position:absolute;left:1682px;top:197px;" width="22" height="22" viewBox="0 0 22 22"><path d="M6 3 L6 19" stroke="#555" stroke-width="1.5"/><path d="M7 6 L18 12 L7 18 Z" fill="#3f6fc0"/></svg>
<svg style="position:absolute;left:1711px;top:197px;" width="22" height="22" viewBox="0 0 22 22"><rect x="4" y="6" width="14" height="10" fill="none" stroke="#ccc"/><path d="M9 8 L14 11 L9 14 Z" fill="#ccc"/></svg>
<div style="left:1741px;top:196px;width:1px;height:24px;background:#d8d8d8;"></div>
<svg style="position:absolute;left:1749px;top:197px;" width="22" height="22" viewBox="0 0 22 22"><circle cx="11" cy="11" r="7" fill="none" stroke="#8aa0c8" stroke-width="1.5"/><path d="M7 13 L11 7 L15 13 Z" fill="#3f6fc0"/></svg>
<svg style="position:absolute;left:1777px;top:197px;" width="22" height="22" viewBox="0 0 22 22"><circle cx="11" cy="11" r="7" fill="none" stroke="#8aa0c8" stroke-width="1.5"/><path d="M7 9 L11 15 L15 9 Z" fill="#3f6fc0"/></svg>
<div style="left:1808px;top:196px;width:1px;height:24px;background:#d8d8d8;"></div>
<svg style="position:absolute;left:1814px;top:197px;" width="22" height="22" viewBox="0 0 22 22"><rect x="5" y="8" width="10" height="10" fill="none" stroke="#ccc" stroke-width="1.2"/><path d="M10 4 L18 4 L18 12" fill="none" stroke="#ccc" stroke-width="1.2"/></svg>
<svg style="position:absolute;left:1842px;top:197px;" width="22" height="22" viewBox="0 0 22 22"><rect x="5" y="8" width="10" height="10" fill="none" stroke="#ccc" stroke-width="1.2"/><path d="M10 4 L18 4 L18 12" fill="none" stroke="#ccc" stroke-width="1.2"/></svg>
<svg style="position:absolute;left:1870px;top:197px;" width="22" height="22" viewBox="0 0 22 22"><rect x="5" y="8" width="10" height="10" fill="none" stroke="#ccc" stroke-width="1.2"/><path d="M10 4 L18 4 L18 12" fill="none" stroke="#ccc" stroke-width="1.2"/></svg>
<div style="left:1899px;top:196px;width:1px;height:24px;background:#d8d8d8;"></div>
<div style="left:1907px;top:196px;width:40px;height:25px;background:#d4d4d4;"></div>
<svg style="position:absolute;left:1910px;top:197px;" width="36" height="22" viewBox="0 0 36 22"><circle cx="11" cy="11" r="8" fill="#fff" stroke="#666" stroke-width="1.2"/><path d="M11 3 A8 8 0 0 1 11 19 Z" fill="#d9a030"/><path d="M13 5 L13 17" stroke="#c33" stroke-width="2"/><path d="M26 10 L32 10 L29 13 Z" fill="#555"/></svg>
<div style="left:1952px;top:196px;width:40px;height:25px;background:#e8e8e8;border:1px solid #e0e0e0;"></div>
<svg style="position:absolute;left:1955px;top:197px;" width="36" height="22" viewBox="0 0 36 22"><circle cx="11" cy="11" r="8" fill="none" stroke="#c8c8c8" stroke-width="1.5"/><path d="M26 10 L32 10 L29 13 Z" fill="#bbb"/></svg>
<div style="left:1996px;top:196px;width:40px;height:25px;background:#d4d4d4;"></div>
<svg style="position:absolute;left:1999px;top:197px;" width="36" height="22" viewBox="0 0 36 22"><rect x="3" y="12" width="18" height="6" fill="#eee" stroke="#777"/><path d="M7 6 L17 6 L12 12 Z" fill="#d2242a"/><rect x="5" y="2" width="14" height="3" fill="#f0a0a0"/><path d="M26 10 L32 10 L29 13 Z" fill="#555"/></svg>
<div style="left:2055px;top:193px;width:69px;height:30px;background:#e5e5e5;"></div>
<svg style="position:absolute;left:2040px;top:208px;" width="10" height="8" viewBox="0 0 10 8"><path d="M1 2 L9 2 L5 6 Z" fill="#555"/></svg>
<div style="left:2px;top:227px;width:403px;height:1013px;background:#e6e6e6;"></div>
<div class="t n" style="left:5px;top:237.11px;font-size:23.5px;color:#505050;font-weight:normal;">3D Objects</div>
<svg style="position:absolute;left:328px;top:244px;" width="14" height="10" viewBox="0 0 14 10"><path d="M1 2 L12 2 L6.5 8 Z" fill="#555"/></svg>
<svg style="position:absolute;left:352px;top:240px;" width="14" height="16" viewBox="0 0 14 16"><path d="M4 2 L10 2 L10 9 L4 9 Z M2 9 L12 9 M7 9 L7 14" fill="none" stroke="#555" stroke-width="1.4"/></svg>
<svg style="position:absolute;left:376px;top:242px;" width="14" height="14" viewBox="0 0 14 14"><path d="M2 2 L11 11 M11 2 L2 11" stroke="#555" stroke-width="1.6"/></svg>
<div style="left:2px;top:272px;width:373px;height:54px;background:#e6e6e6;"></div>
<div style="left:52px;top:285px;width:1px;height:40px;background:#d8d8d8;"></div>
<div class="t" style="left:-171px;width:800px;text-align:center;top:291.73px;font-size:14.5px;color:#505050;font-weight:bold;">Name</div>
<div style="left:2px;top:325.5px;width:373px;height:2px;background:#c4c4c4;"></div>
<div style="left:2px;top:327.5px;width:50px;height:895px;background:#e9e9e9;"></div>
<div style="left:52px;top:327.5px;width:323px;height:895px;background:#ffffff;"></div>
<div style="left:2px;top:327.5px;width:373px;height:894.5px;overflow:hidden;">
<div style="left:0px;top:24.5px;width:373px;height:1px;background:#dcdcdc;"></div>
<svg style="position:absolute;left:55.34px;top:8.0px;" width="11" height="11" viewBox="0 0 11 11"><path d="M9.5 1.5 L9.5 9.5 L1.5 9.5 Z" fill="#505050"/></svg>
<svg style="position:absolute;left:73.34px;top:5.0px;" width="17" height="17" viewBox="0 0 17 17"><rect x="1" y="1" width="15" height="15" fill="#fff" stroke="#c4c4c4" stroke-width="1.5"/><path d="M4.5 8.5 L7.5 11.5 L12.5 5" fill="none" stroke="#cfcfcf" stroke-width="1.5"/></svg>
<div class="t" style="left:96.84px;top:4.13px;font-size:15.2px;color:#2e57a6;font-weight:bold;">Objects of scene</div>
<div style="left:0px;top:49.5px;width:373px;height:1px;background:#dcdcdc;"></div>
<div class="t n" style="left:5px;top:29.62px;font-size:15px;color:#555;font-weight:normal;">2</div>
<svg style="position:absolute;left:80.67px;top:31.319999999999993px;" width="11" height="14" viewBox="0 0 11 14"><path d="M2 2 L9 7 L2 12 Z" fill="#fff" stroke="#8a8a8a" stroke-width="1.3"/></svg>
<svg style="position:absolute;left:98.67px;top:29.819999999999993px;" width="17" height="17" viewBox="0 0 17 17"><rect x="1.5" y="1.5" width="14" height="14" fill="#fff" stroke="#222" stroke-width="2.4"/></svg>
<div class="t" style="left:122.17px;top:29.45px;font-size:15.2px;color:#222;font-weight:bold;">Architecture.dwfx</div>
<div style="left:0px;top:74.5px;width:373px;height:1px;background:#dcdcdc;"></div>
<div class="t n" style="left:5px;top:54.94px;font-size:15px;color:#555;font-weight:normal;">3</div>
<svg style="position:absolute;left:80.67px;top:56.639999999999986px;" width="11" height="14" viewBox="0 0 11 14"><path d="M2 2 L9 7 L2 12 Z" fill="#fff" stroke="#8a8a8a" stroke-width="1.3"/></svg>
<svg style="position:absolute;left:98.67px;top:55.139999999999986px;" width="17" height="17" viewBox="0 0 17 17"><rect x="1.5" y="1.5" width="14" height="14" fill="#fff" stroke="#222" stroke-width="2.4"/></svg>
<div class="t" style="left:122.17px;top:54.77px;font-size:15.2px;color:#222;font-weight:bold;">Landscape.dwfx</div>
<div style="left:0px;top:100.5px;width:373px;height:1px;background:#dcdcdc;"></div>
<div class="t n" style="left:5px;top:80.26px;font-size:15px;color:#555;font-weight:normal;">4</div>
<svg style="position:absolute;left:80.67px;top:81.96000000000004px;" width="11" height="14" viewBox="0 0 11 14"><path d="M2 2 L9 7 L2 12 Z" fill="#fff" stroke="#8a8a8a" stroke-width="1.3"/></svg>
<svg style="position:absolute;left:98.67px;top:80.46000000000004px;" width="17" height="17" viewBox="0 0 17 17"><rect x="1.5" y="1.5" width="14" height="14" fill="#fff" stroke="#222" stroke-width="2.4"/></svg>
<div class="t" style="left:122.17px;top:80.09px;font-size:15.2px;color:#222;font-weight:bold;">Site.dwfx</div>
<div style="left:0px;top:125.5px;width:373px;height:1px;background:#dcdcdc;"></div>
<div class="t n" style="left:5px;top:105.58px;font-size:15px;color:#555;font-weight:normal;">5</div>
<svg style="position:absolute;left:80.67px;top:109.27999999999997px;" width="11" height="11" viewBox="0 0 11 11"><path d="M9.5 1.5 L9.5 9.5 L1.5 9.5 Z" fill="#505050"/></svg>
<svg style="position:absolute;left:98.67px;top:105.77999999999997px;" width="17" height="17" viewBox="0 0 17 17"><rect x="1.5" y="1.5" width="14" height="14" fill="#fff" stroke="#222" stroke-width="2.4"/><path d="M4 8 L7.5 12 L13 4.5" fill="none" stroke="#222" stroke-width="2.2"/></svg>
<div class="t" style="left:122.17px;top:105.41px;font-size:15.2px;color:#222;font-weight:bold;">Structure.dwfx</div>
<div style="left:0px;top:150.5px;width:373px;height:1px;background:#dcdcdc;"></div>
<div class="t n" style="left:5px;top:130.90px;font-size:15px;color:#555;font-weight:normal;">6</div>
<svg style="position:absolute;left:106.0px;top:134.60000000000002px;" width="11" height="11" viewBox="0 0 11 11"><path d="M9.5 1.5 L9.5 9.5 L1.5 9.5 Z" fill="#505050"/></svg>
<svg style="position:absolute;left:124.0px;top:130.60000000000002px;" width="17" height="17" viewBox="0 0 17 17"><rect x="0.5" y="0.5" width="16" height="16" rx="1.5" fill="#252525"/><rect x="3" y="3" width="11" height="11" fill="none" stroke="#b0b0b0" stroke-width="1"/><rect x="4.5" y="4.5" width="8" height="8" fill="#252525"/></svg>
<div class="t n" style="left:147.5px;top:130.39px;font-size:15.6px;color:#333;font-weight:normal;">Columns (209)</div>
<div style="left:0px;top:176.5px;width:373px;height:1px;background:#dcdcdc;"></div>
<div class="t n" style="left:5px;top:156.22px;font-size:15px;color:#555;font-weight:normal;">7</div>
<svg style="position:absolute;left:131.32999999999998px;top:159.92000000000002px;" width="11" height="11" viewBox="0 0 11 11"><path d="M9.5 1.5 L9.5 9.5 L1.5 9.5 Z" fill="#505050"/></svg>
<svg style="position:absolute;left:149.32999999999998px;top:155.92000000000002px;" width="17" height="17" viewBox="0 0 17 17"><rect x="0.5" y="0.5" width="16" height="16" rx="1.5" fill="#252525"/><rect x="3" y="3" width="11" height="11" fill="none" stroke="#b0b0b0" stroke-width="1"/><rect x="4.5" y="4.5" width="8" height="8" fill="#252525"/></svg>
<div class="t n" style="left:172.82999999999998px;top:155.71px;font-size:15.6px;color:#333;font-weight:normal;">Round (209)</div>
<div style="left:0px;top:201.5px;width:373px;height:1px;background:#dcdcdc;"></div>
<div class="t n" style="left:5px;top:181.54px;font-size:15px;color:#555;font-weight:normal;">8</div>
<svg style="position:absolute;left:156.66px;top:183.24px;" width="11" height="14" viewBox="0 0 11 14"><path d="M2 2 L9 7 L2 12 Z" fill="#fff" stroke="#8a8a8a" stroke-width="1.3"/></svg>
<svg style="position:absolute;left:174.66px;top:181.24px;" width="17" height="17" viewBox="0 0 17 17"><rect x="0.5" y="0.5" width="16" height="16" rx="1.5" fill="#252525"/><rect x="3" y="3" width="11" height="11" fill="none" stroke="#b0b0b0" stroke-width="1"/><rect x="4.5" y="4.5" width="8" height="8" fill="#252525"/></svg>
<div class="t n" style="left:198.16px;top:181.03px;font-size:15.6px;color:#333;font-weight:normal;">200mm Diameter (2)</div>
<div style="left:0px;top:226.5px;width:373px;height:1px;background:#dcdcdc;"></div>
<div class="t n" style="left:5px;top:206.86px;font-size:15px;color:#555;font-weight:normal;">9</div>
<svg style="position:absolute;left:156.66px;top:208.55999999999995px;" width="11" height="14" viewBox="0 0 11 14"><path d="M2 2 L9 7 L2 12 Z" fill="#fff" stroke="#8a8a8a" stroke-width="1.3"/></svg>
<svg style="position:absolute;left:174.66px;top:206.55999999999995px;" width="17" height="17" viewBox="0 0 17 17"><rect x="0.5" y="0.5" width="16" height="16" rx="1.5" fill="#252525"/><rect x="3" y="3" width="11" height="11" fill="none" stroke="#b0b0b0" stroke-width="1"/><rect x="4.5" y="4.5" width="8" height="8" fill="#252525"/></svg>
<div class="t n" style="left:198.16px;top:206.35px;font-size:15.6px;color:#333;font-weight:normal;">300mm Diameter (2)</div>
<div style="left:0px;top:252.5px;width:373px;height:1px;background:#dcdcdc;"></div>
<div class="t n" style="left:5px;top:232.18px;font-size:15px;color:#555;font-weight:normal;">10</div>
<svg style="position:absolute;left:156.66px;top:235.88px;" width="11" height="11" viewBox="0 0 11 11"><path d="M9.5 1.5 L9.5 9.5 L1.5 9.5 Z" fill="#505050"/></svg>
<svg style="position:absolute;left:174.66px;top:231.88px;" width="17" height="17" viewBox="0 0 17 17"><rect x="0.5" y="0.5" width="16" height="16" rx="1.5" fill="#252525"/><rect x="3" y="3" width="11" height="11" fill="none" stroke="#b0b0b0" stroke-width="1"/><rect x="4.5" y="4.5" width="8" height="8" fill="#252525"/></svg>
<div class="t n" style="left:198.16px;top:231.67px;font-size:15.6px;color:#333;font-weight:normal;">Piles (205)</div>
<div style="left:0px;top:277.5px;width:373px;height:1px;background:#dcdcdc;"></div>
<div class="t n" style="left:5px;top:257.50px;font-size:15px;color:#555;font-weight:normal;">11</div>
<svg style="position:absolute;left:199.99px;top:257.20000000000005px;" width="17" height="17" viewBox="0 0 17 17"><rect x="0.5" y="0.5" width="16" height="16" rx="1.5" fill="#252525"/><rect x="3" y="3" width="11" height="11" fill="none" stroke="#b0b0b0" stroke-width="1"/><rect x="4.5" y="4.5" width="8" height="8" fill="#252525"/></svg>
<div class="t n" style="left:223.49px;top:256.99px;font-size:15.6px;color:#333;font-weight:normal;">Round [458819]</div>
<div style="left:50px;top:278.52px;width:323px;height:25.32px;background:#fff350;"></div>
<div style="left:0px;top:302.5px;width:373px;height:1px;background:#dcdcdc;"></div>
<div class="t n" style="left:5px;top:282.82px;font-size:15px;color:#555;font-weight:normal;">12</div>
<svg style="position:absolute;left:199.99px;top:282.52px;" width="17" height="17" viewBox="0 0 17 17"><rect x="0.5" y="0.5" width="16" height="16" rx="1.5" fill="#252525"/><rect x="3" y="3" width="11" height="11" fill="none" stroke="#b0b0b0" stroke-width="1"/><rect x="4.5" y="4.5" width="8" height="8" fill="#252525"/></svg>
<div class="t n" style="left:223.49px;top:282.31px;font-size:15.6px;color:#333;font-weight:normal;">Round [458820]</div>
<div style="left:0px;top:328.5px;width:373px;height:1px;background:#dcdcdc;"></div>
<div class="t n" style="left:5px;top:308.14px;font-size:15px;color:#555;font-weight:normal;">13</div>
<svg style="position:absolute;left:199.99px;top:307.84000000000003px;" width="17" height="17" viewBox="0 0 17 17"><rect x="0.5" y="0.5" width="16" height="16" rx="1.5" fill="#252525"/><rect x="3" y="3" width="11" height="11" fill="none" stroke="#b0b0b0" stroke-width="1"/><rect x="4.5" y="4.5" width="8" height="8" fill="#252525"/></svg>
<div class="t n" style="left:223.49px;top:307.63px;font-size:15.6px;color:#333;font-weight:normal;">Round [458821]</div>
<div style="left:0px;top:353.5px;width:373px;height:1px;background:#dcdcdc;"></div>
<div class="t n" style="left:5px;top:333.46px;font-size:15px;color:#555;font-weight:normal;">14</div>
<svg style="position:absolute;left:199.99px;top:333.1600000000001px;" width="17" height="17" viewBox="0 0 17 17"><rect x="0.5" y="0.5" width="16" height="16" rx="1.5" fill="#252525"/><rect x="3" y="3" width="11" height="11" fill="none" stroke="#b0b0b0" stroke-width="1"/><rect x="4.5" y="4.5" width="8" height="8" fill="#252525"/></svg>
<div class="t n" style="left:223.49px;top:332.95px;font-size:15.6px;color:#333;font-weight:normal;">Round [458822]</div>
<div style="left:0px;top:378.5px;width:373px;height:1px;background:#dcdcdc;"></div>
<div class="t n" style="left:5px;top:358.78px;font-size:15px;color:#555;font-weight:normal;">15</div>
<svg style="position:absolute;left:199.99px;top:358.48px;" width="17" height="17" viewBox="0 0 17 17"><rect x="0.5" y="0.5" width="16" height="16" rx="1.5" fill="#252525"/><rect x="3" y="3" width="11" height="11" fill="none" stroke="#b0b0b0" stroke-width="1"/><rect x="4.5" y="4.5" width="8" height="8" fill="#252525"/></svg>
<div class="t n" style="left:223.49px;top:358.27px;font-size:15.6px;color:#333;font-weight:normal;">Round [752840]</div>
<div style="left:0px;top:404.5px;width:373px;height:1px;background:#dcdcdc;"></div>
<div class="t n" style="left:5px;top:384.10px;font-size:15px;color:#555;font-weight:normal;">16</div>
<svg style="position:absolute;left:199.99px;top:383.79999999999995px;" width="17" height="17" viewBox="0 0 17 17"><rect x="0.5" y="0.5" width="16" height="16" rx="1.5" fill="#252525"/><rect x="3" y="3" width="11" height="11" fill="none" stroke="#b0b0b0" stroke-width="1"/><rect x="4.5" y="4.5" width="8" height="8" fill="#252525"/></svg>
<div class="t n" style="left:223.49px;top:383.59px;font-size:15.6px;color:#333;font-weight:normal;">Round [752841]</div>
<div style="left:0px;top:429.5px;width:373px;height:1px;background:#dcdcdc;"></div>
<div class="t n" style="left:5px;top:409.42px;font-size:15px;color:#555;font-weight:normal;">17</div>
<svg style="position:absolute;left:199.99px;top:409.12px;" width="17" height="17" viewBox="0 0 17 17"><rect x="0.5" y="0.5" width="16" height="16" rx="1.5" fill="#252525"/><rect x="3" y="3" width="11" height="11" fill="none" stroke="#b0b0b0" stroke-width="1"/><rect x="4.5" y="4.5" width="8" height="8" fill="#252525"/></svg>
<div class="t n" style="left:223.49px;top:408.91px;font-size:15.6px;color:#333;font-weight:normal;">Round [752842]</div>
<div style="left:0px;top:454.5px;width:373px;height:1px;background:#dcdcdc;"></div>
<div class="t n" style="left:5px;top:434.74px;font-size:15px;color:#555;font-weight:normal;">18</div>
<svg style="position:absolute;left:199.99px;top:434.44000000000005px;" width="17" height="17" viewBox="0 0 17 17"><rect x="0.5" y="0.5" width="16" height="16" rx="1.5" fill="#252525"/><rect x="3" y="3" width="11" height="11" fill="none" stroke="#b0b0b0" stroke-width="1"/><rect x="4.5" y="4.5" width="8" height="8" fill="#252525"/></svg>
<div class="t n" style="left:223.49px;top:434.23px;font-size:15.6px;color:#333;font-weight:normal;">Round [752843]</div>
<div style="left:0px;top:480.5px;width:373px;height:1px;background:#dcdcdc;"></div>
<div class="t n" style="left:5px;top:460.06px;font-size:15px;color:#555;font-weight:normal;">19</div>
<svg style="position:absolute;left:199.99px;top:459.76px;" width="17" height="17" viewBox="0 0 17 17"><rect x="0.5" y="0.5" width="16" height="16" rx="1.5" fill="#252525"/><rect x="3" y="3" width="11" height="11" fill="none" stroke="#b0b0b0" stroke-width="1"/><rect x="4.5" y="4.5" width="8" height="8" fill="#252525"/></svg>
<div class="t n" style="left:223.49px;top:459.55px;font-size:15.6px;color:#333;font-weight:normal;">Round [752860]</div>
<div style="left:0px;top:505.5px;width:373px;height:1px;background:#dcdcdc;"></div>
<div class="t n" style="left:5px;top:485.38px;font-size:15px;color:#555;font-weight:normal;">20</div>
<svg style="position:absolute;left:199.99px;top:485.0799999999999px;" width="17" height="17" viewBox="0 0 17 17"><rect x="0.5" y="0.5" width="16" height="16" rx="1.5" fill="#252525"/><rect x="3" y="3" width="11" height="11" fill="none" stroke="#b0b0b0" stroke-width="1"/><rect x="4.5" y="4.5" width="8" height="8" fill="#252525"/></svg>
<div class="t n" style="left:223.49px;top:484.87px;font-size:15.6px;color:#333;font-weight:normal;">Round [752861]</div>
<div style="left:0px;top:530.5px;width:373px;height:1px;background:#dcdcdc;"></div>
<div class="t n" style="left:5px;top:510.70px;font-size:15px;color:#555;font-weight:normal;">21</div>
<svg style="position:absolute;left:199.99px;top:510.4px;" width="17" height="17" viewBox="0 0 17 17"><rect x="0.5" y="0.5" width="16" height="16" rx="1.5" fill="#252525"/><rect x="3" y="3" width="11" height="11" fill="none" stroke="#b0b0b0" stroke-width="1"/><rect x="4.5" y="4.5" width="8" height="8" fill="#252525"/></svg>
<div class="t n" style="left:223.49px;top:510.19px;font-size:15.6px;color:#333;font-weight:normal;">Round [752873]</div>
<div style="left:0px;top:556.5px;width:373px;height:1px;background:#dcdcdc;"></div>
<div class="t n" style="left:5px;top:536.02px;font-size:15px;color:#555;font-weight:normal;">22</div>
<svg style="position:absolute;left:199.99px;top:535.72px;" width="17" height="17" viewBox="0 0 17 17"><rect x="0.5" y="0.5" width="16" height="16" rx="1.5" fill="#252525"/><rect x="3" y="3" width="11" height="11" fill="none" stroke="#b0b0b0" stroke-width="1"/><rect x="4.5" y="4.5" width="8" height="8" fill="#252525"/></svg>
<div class="t n" style="left:223.49px;top:535.51px;font-size:15.6px;color:#333;font-weight:normal;">Round [752874]</div>
<div style="left:0px;top:581.5px;width:373px;height:1px;background:#dcdcdc;"></div>
<div class="t n" style="left:5px;top:561.34px;font-size:15px;color:#555;font-weight:normal;">23</div>
<svg style="position:absolute;left:199.99px;top:561.04px;" width="17" height="17" viewBox="0 0 17 17"><rect x="0.5" y="0.5" width="16" height="16" rx="1.5" fill="#252525"/><rect x="3" y="3" width="11" height="11" fill="none" stroke="#b0b0b0" stroke-width="1"/><rect x="4.5" y="4.5" width="8" height="8" fill="#252525"/></svg>
<div class="t n" style="left:223.49px;top:560.83px;font-size:15.6px;color:#333;font-weight:normal;">Round [752886]</div>
<div style="left:0px;top:606.5px;width:373px;height:1px;background:#dcdcdc;"></div>
<div class="t n" style="left:5px;top:586.66px;font-size:15px;color:#555;font-weight:normal;">24</div>
<svg style="position:absolute;left:199.99px;top:586.36px;" width="17" height="17" viewBox="0 0 17 17"><rect x="0.5" y="0.5" width="16" height="16" rx="1.5" fill="#252525"/><rect x="3" y="3" width="11" height="11" fill="none" stroke="#b0b0b0" stroke-width="1"/><rect x="4.5" y="4.5" width="8" height="8" fill="#252525"/></svg>
<div class="t n" style="left:223.49px;top:586.15px;font-size:15.6px;color:#333;font-weight:normal;">Round [752887]</div>
<div style="left:0px;top:632.5px;width:373px;height:1px;background:#dcdcdc;"></div>
<div class="t n" style="left:5px;top:611.98px;font-size:15px;color:#555;font-weight:normal;">25</div>
<svg style="position:absolute;left:199.99px;top:611.6800000000001px;" width="17" height="17" viewBox="0 0 17 17"><rect x="0.5" y="0.5" width="16" height="16" rx="1.5" fill="#252525"/><rect x="3" y="3" width="11" height="11" fill="none" stroke="#b0b0b0" stroke-width="1"/><rect x="4.5" y="4.5" width="8" height="8" fill="#252525"/></svg>
<div class="t n" style="left:223.49px;top:611.47px;font-size:15.6px;color:#333;font-weight:normal;">Round [752899]</div>
<div style="left:0px;top:657.5px;width:373px;height:1px;background:#dcdcdc;"></div>
<div class="t n" style="left:5px;top:637.30px;font-size:15px;color:#555;font-weight:normal;">26</div>
<svg style="position:absolute;left:199.99px;top:637.0px;" width="17" height="17" viewBox="0 0 17 17"><rect x="0.5" y="0.5" width="16" height="16" rx="1.5" fill="#252525"/><rect x="3" y="3" width="11" height="11" fill="none" stroke="#b0b0b0" stroke-width="1"/><rect x="4.5" y="4.5" width="8" height="8" fill="#252525"/></svg>
<div class="t n" style="left:223.49px;top:636.79px;font-size:15.6px;color:#333;font-weight:normal;">Round [752900]</div>
<div style="left:0px;top:682.5px;width:373px;height:1px;background:#dcdcdc;"></div>
<div class="t n" style="left:5px;top:662.62px;font-size:15px;color:#555;font-weight:normal;">27</div>
<svg style="position:absolute;left:199.99px;top:662.32px;" width="17" height="17" viewBox="0 0 17 17"><rect x="0.5" y="0.5" width="16" height="16" rx="1.5" fill="#252525"/><rect x="3" y="3" width="11" height="11" fill="none" stroke="#b0b0b0" stroke-width="1"/><rect x="4.5" y="4.5" width="8" height="8" fill="#252525"/></svg>
<div class="t n" style="left:223.49px;top:662.11px;font-size:15.6px;color:#333;font-weight:normal;">Round [752901]</div>
<div style="left:0px;top:707.5px;width:373px;height:1px;background:#dcdcdc;"></div>
<div class="t n" style="left:5px;top:687.94px;font-size:15px;color:#555;font-weight:normal;">28</div>
<svg style="position:absolute;left:199.99px;top:687.64px;" width="17" height="17" viewBox="0 0 17 17"><rect x="0.5" y="0.5" width="16" height="16" rx="1.5" fill="#252525"/><rect x="3" y="3" width="11" height="11" fill="none" stroke="#b0b0b0" stroke-width="1"/><rect x="4.5" y="4.5" width="8" height="8" fill="#252525"/></svg>
<div class="t n" style="left:223.49px;top:687.43px;font-size:15.6px;color:#333;font-weight:normal;">Round [752902]</div>
<div style="left:0px;top:733.5px;width:373px;height:1px;background:#dcdcdc;"></div>
<div class="t n" style="left:5px;top:713.26px;font-size:15px;color:#555;font-weight:normal;">29</div>
<svg style="position:absolute;left:199.99px;top:712.96px;" width="17" height="17" viewBox="0 0 17 17"><rect x="0.5" y="0.5" width="16" height="16" rx="1.5" fill="#252525"/><rect x="3" y="3" width="11" height="11" fill="none" stroke="#b0b0b0" stroke-width="1"/><rect x="4.5" y="4.5" width="8" height="8" fill="#252525"/></svg>
<div class="t n" style="left:223.49px;top:712.75px;font-size:15.6px;color:#333;font-weight:normal;">Round [752912]</div>
<div style="left:0px;top:758.5px;width:373px;height:1px;background:#dcdcdc;"></div>
<div class="t n" style="left:5px;top:738.58px;font-size:15px;color:#555;font-weight:normal;">30</div>
<svg style="position:absolute;left:199.99px;top:738.28px;" width="17" height="17" viewBox="0 0 17 17"><rect x="0.5" y="0.5" width="16" height="16" rx="1.5" fill="#252525"/><rect x="3" y="3" width="11" height="11" fill="none" stroke="#b0b0b0" stroke-width="1"/><rect x="4.5" y="4.5" width="8" height="8" fill="#252525"/></svg>
<div class="t n" style="left:223.49px;top:738.07px;font-size:15.6px;color:#333;font-weight:normal;">Round [752913]</div>
<div style="left:0px;top:783.5px;width:373px;height:1px;background:#dcdcdc;"></div>
<div class="t n" style="left:5px;top:763.90px;font-size:15px;color:#555;font-weight:normal;">31</div>
<svg style="position:absolute;left:199.99px;top:763.5999999999999px;" width="17" height="17" viewBox="0 0 17 17"><rect x="0.5" y="0.5" width="16" height="16" rx="1.5" fill="#252525"/><rect x="3" y="3" width="11" height="11" fill="none" stroke="#b0b0b0" stroke-width="1"/><rect x="4.5" y="4.5" width="8" height="8" fill="#252525"/></svg>
<div class="t n" style="left:223.49px;top:763.39px;font-size:15.6px;color:#333;font-weight:normal;">Round [752914]</div>
<div style="left:0px;top:809.5px;width:373px;height:1px;background:#dcdcdc;"></div>
<div class="t n" style="left:5px;top:789.22px;font-size:15px;color:#555;font-weight:normal;">32</div>
<svg style="position:absolute;left:199.99px;top:788.9200000000001px;" width="17" height="17" viewBox="0 0 17 17"><rect x="0.5" y="0.5" width="16" height="16" rx="1.5" fill="#252525"/><rect x="3" y="3" width="11" height="11" fill="none" stroke="#b0b0b0" stroke-width="1"/><rect x="4.5" y="4.5" width="8" height="8" fill="#252525"/></svg>
<div class="t n" style="left:223.49px;top:788.71px;font-size:15.6px;color:#333;font-weight:normal;">Round [752915]</div>
<div style="left:0px;top:834.5px;width:373px;height:1px;background:#dcdcdc;"></div>
<div class="t n" style="left:5px;top:814.54px;font-size:15px;color:#555;font-weight:normal;">33</div>
<svg style="position:absolute;left:199.99px;top:814.24px;" width="17" height="17" viewBox="0 0 17 17"><rect x="0.5" y="0.5" width="16" height="16" rx="1.5" fill="#252525"/><rect x="3" y="3" width="11" height="11" fill="none" stroke="#b0b0b0" stroke-width="1"/><rect x="4.5" y="4.5" width="8" height="8" fill="#252525"/></svg>
<div class="t n" style="left:223.49px;top:814.03px;font-size:15.6px;color:#333;font-weight:normal;">Round [752927]</div>
<div style="left:0px;top:859.5px;width:373px;height:1px;background:#dcdcdc;"></div>
<div class="t n" style="left:5px;top:839.86px;font-size:15px;color:#555;font-weight:normal;">34</div>
<svg style="position:absolute;left:199.99px;top:839.56px;" width="17" height="17" viewBox="0 0 17 17"><rect x="0.5" y="0.5" width="16" height="16" rx="1.5" fill="#252525"/><rect x="3" y="3" width="11" height="11" fill="none" stroke="#b0b0b0" stroke-width="1"/><rect x="4.5" y="4.5" width="8" height="8" fill="#252525"/></svg>
<div class="t n" style="left:223.49px;top:839.35px;font-size:15.6px;color:#333;font-weight:normal;">Round [752928]</div>
<div style="left:0px;top:885.5px;width:373px;height:1px;background:#dcdcdc;"></div>
<div class="t n" style="left:5px;top:865.18px;font-size:15px;color:#555;font-weight:normal;">35</div>
<svg style="position:absolute;left:199.99px;top:864.8800000000001px;" width="17" height="17" viewBox="0 0 17 17"><rect x="0.5" y="0.5" width="16" height="16" rx="1.5" fill="#252525"/><rect x="3" y="3" width="11" height="11" fill="none" stroke="#b0b0b0" stroke-width="1"/><rect x="4.5" y="4.5" width="8" height="8" fill="#252525"/></svg>
<div class="t n" style="left:223.49px;top:864.67px;font-size:15.6px;color:#333;font-weight:normal;">Round [752929]</div>
<div style="left:0px;top:910.5px;width:373px;height:1px;background:#dcdcdc;"></div>
<div class="t n" style="left:5px;top:890.50px;font-size:15px;color:#555;font-weight:normal;">36</div>
<svg style="position:absolute;left:199.99px;top:890.2px;" width="17" height="17" viewBox="0 0 17 17"><rect x="0.5" y="0.5" width="16" height="16" rx="1.5" fill="#252525"/><rect x="3" y="3" width="11" height="11" fill="none" stroke="#b0b0b0" stroke-width="1"/><rect x="4.5" y="4.5" width="8" height="8" fill="#252525"/></svg>
<div class="t n" style="left:223.49px;top:889.99px;font-size:15.6px;color:#333;font-weight:normal;">Round [752930]</div>
</div>
<svg style="position:absolute;left:318px;top:634px;" width="26" height="32" viewBox="0 0 26 32"><path d="M7 2.5 Q9 1 11 2.5 L11 12 L13 11 Q15 11 15.5 13 L17 12.5 Q19 12.5 19.5 14.5 L21 14.5 Q23 15 23 17 L23 23 Q22 29 16 30 L10 30 Q6 29 4 24 L1.5 17 Q1.5 15 4 15.5 L7 19 Z" fill="#fff" stroke="#6a6a6a" stroke-width="1.3"/><path d="M11 12 L11 18 M15.5 13 L15.5 18 M19.5 14.5 L19.5 18" stroke="#999" stroke-width="1"/></svg>
<div style="left:375px;top:272px;width:20px;height:950px;background:#ececec;"></div>
<div style="left:376px;top:272px;width:18px;height:21px;background:#fff;border:1px solid #dadada;"></div>
<svg style="position:absolute;left:379px;top:277px;" width="12" height="10" viewBox="0 0 12 10"><path d="M1 8 L11 8 L6 2 Z" fill="#666"/></svg>
<div style="left:376px;top:294px;width:18px;height:121px;background:#fff;border:1px solid #dadada;"></div>
<div style="left:376px;top:1201px;width:18px;height:21px;background:#fff;border:1px solid #dadada;"></div>
<svg style="position:absolute;left:379px;top:1207px;" width="12" height="10" viewBox="0 0 12 10"><path d="M1 2 L11 2 L6 8 Z" fill="#666"/></svg>
<div style="left:2px;top:1222px;width:393px;height:18px;background:#e8e8e8;"></div>
<div style="left:2px;top:1222px;width:21px;height:18px;background:#f4f4f4;border:1px solid #dadada;"></div>
<svg style="position:absolute;left:8px;top:1226px;" width="10" height="12" viewBox="0 0 10 12"><path d="M8 1 L8 11 L2 6 Z" fill="#666"/></svg>
<div style="left:23px;top:1222px;width:285px;height:18px;background:#fafafa;"></div>
<div style="left:354px;top:1222px;width:19px;height:18px;background:#f4f4f4;border:1px solid #dadada;"></div>
<svg style="position:absolute;left:359px;top:1226px;" width="10" height="12" viewBox="0 0 10 12"><path d="M2 1 L2 11 L8 6 Z" fill="#666"/></svg>
<div style="left:397px;top:227px;width:8px;height:1013px;background:#ededed;"></div>
<div style="left:406px;top:229px;width:723px;height:460px;background:#e6e6e6;border:2px solid #8c8c8c;border-right-color:#b8b8b8;border-bottom-color:#c8c8c8;"></div>
<div style="left:408px;top:231px;width:700px;height:53px;background:#e6e6e6;"></div>
<div style="left:458px;top:240px;width:1px;height:44px;background:#d6d6d6;"></div>
<div style="left:521px;top:240px;width:1px;height:44px;background:#d6d6d6;"></div>
<div style="left:902px;top:240px;width:1px;height:44px;background:#d6d6d6;"></div>
<div style="left:1046px;top:240px;width:1px;height:44px;background:#d6d6d6;"></div>
<div class="t" style="left:470px;top:250.50px;font-size:15px;color:#4a4a4a;font-weight:bold;">ID</div>
<div class="t" style="left:299px;width:800px;text-align:center;top:250.50px;font-size:15px;color:#4a4a4a;font-weight:bold;">Name</div>
<div class="t" style="left:562px;width:800px;text-align:center;top:250.50px;font-size:15px;color:#4a4a4a;font-weight:bold;">Duration</div>
<div style="left:408px;top:283.5px;width:700px;height:1.5px;background:#bdbdbd;"></div>
<div style="left:408px;top:284.5px;width:50px;height:25.38px;background:#e8e8e8;"></div>
<div style="left:408px;top:309px;width:50px;height:1px;background:#d8d8d8;"></div>
<div class="t n" style="left:414px;top:289.20px;font-size:15px;color:#555;font-weight:normal;">1</div>
<div style="left:458px;top:284.5px;width:650px;height:25.38px;background:#e0e1e3;"></div>
<svg style="position:absolute;left:527px;top:292.5px;" width="11" height="11" viewBox="0 0 11 11"><path d="M9 1 L9 9 L1 9 Z" fill="#555"/></svg>
<div class="t" style="left:545px;top:289.20px;font-size:15px;color:#3c3c3c;font-weight:bold;">Office Building, Core & Shell</div>
<div class="t" style="left:574px;width:800px;text-align:center;top:289.20px;font-size:15px;color:#3c3c3c;font-weight:bold;">323d</div>
<div style="left:408px;top:309.88px;width:50px;height:25.38px;background:#e8e8e8;"></div>
<div style="left:408px;top:334px;width:50px;height:1px;background:#d8d8d8;"></div>
<div class="t n" style="left:414px;top:314.58px;font-size:15px;color:#555;font-weight:normal;">2</div>
<div style="left:458px;top:309.88px;width:650px;height:25.38px;background:#c9d5de;"></div>
<svg style="position:absolute;left:552px;top:317.88px;" width="11" height="11" viewBox="0 0 11 11"><path d="M9 1 L9 9 L1 9 Z" fill="#555"/></svg>
<div class="t" style="left:570px;top:314.58px;font-size:15px;color:#3c3c3c;font-weight:bold;">Pre Construction</div>
<div class="t" style="left:574px;width:800px;text-align:center;top:314.58px;font-size:15px;color:#3c3c3c;font-weight:bold;">20d</div>
<div style="left:408px;top:335.26px;width:50px;height:25.38px;background:#e8e8e8;"></div>
<div style="left:408px;top:360px;width:50px;height:1px;background:#d8d8d8;"></div>
<div class="t n" style="left:414px;top:339.96px;font-size:15px;color:#555;font-weight:normal;">3</div>
<div style="left:458px;top:335.26px;width:650px;height:25.38px;background:#ffffff;"></div>
<div style="left:521px;top:335.26px;width:1px;height:25.38px;background:#e4e4e4;"></div>
<div style="left:902px;top:335.26px;width:1px;height:25.38px;background:#e4e4e4;"></div>
<div style="left:1046px;top:335.26px;width:1px;height:25.38px;background:#e4e4e4;"></div>
<div style="left:458px;top:360px;width:650px;height:1px;background:#e2e2e2;"></div>
<div class="t n" style="left:463px;top:339.96px;font-size:15px;color:#333;font-weight:normal;">ST00...</div>
<div class="t n" style="left:596px;top:339.96px;font-size:15px;color:#333;font-weight:normal;">Notice to Proceed</div>
<div class="t n" style="left:574px;width:800px;text-align:center;top:339.96px;font-size:15px;color:#999;font-weight:normal;">0d</div>
<div class="t n" style="left:306px;width:800px;text-align:right;top:339.96px;font-size:15px;color:#333;font-weight:normal;">9:</div>
<div style="left:408px;top:360.64px;width:50px;height:25.38px;background:#e8e8e8;"></div>
<div style="left:408px;top:385px;width:50px;height:1px;background:#d8d8d8;"></div>
<div class="t n" style="left:414px;top:365.34px;font-size:15px;color:#555;font-weight:normal;">4</div>
<div style="left:458px;top:360.64px;width:650px;height:25.38px;background:#fff350;"></div>
<div style="left:521px;top:360.64px;width:1px;height:25.38px;background:#f0e060;"></div>
<div style="left:902px;top:360.64px;width:1px;height:25.38px;background:#f0e060;"></div>
<div style="left:1046px;top:360.64px;width:1px;height:25.38px;background:#f0e060;"></div>
<div class="t n" style="left:463px;top:365.34px;font-size:15px;color:#333;font-weight:normal;">ST00...</div>
<div class="t n" style="left:596px;top:365.34px;font-size:15px;color:#333;font-weight:normal;">Building Permit</div>
<div class="t n" style="left:574px;width:800px;text-align:center;top:365.34px;font-size:15px;color:#333;font-weight:normal;">20d</div>
<div style="left:408px;top:386.02px;width:50px;height:25.38px;background:#e8e8e8;"></div>
<div style="left:408px;top:410px;width:50px;height:1px;background:#d8d8d8;"></div>
<div class="t n" style="left:414px;top:390.72px;font-size:15px;color:#555;font-weight:normal;">5</div>
<div style="left:458px;top:386.02px;width:650px;height:25.38px;background:#ffffff;"></div>
<div style="left:521px;top:386.02px;width:1px;height:25.38px;background:#e4e4e4;"></div>
<div style="left:902px;top:386.02px;width:1px;height:25.38px;background:#e4e4e4;"></div>
<div style="left:1046px;top:386.02px;width:1px;height:25.38px;background:#e4e4e4;"></div>
<div style="left:458px;top:410px;width:650px;height:1px;background:#e2e2e2;"></div>
<div class="t n" style="left:463px;top:390.72px;font-size:15px;color:#333;font-weight:normal;">ST00...</div>
<div class="t n" style="left:596px;top:390.72px;font-size:15px;color:#333;font-weight:normal;">Award Subcontractors</div>
<div class="t n" style="left:574px;width:800px;text-align:center;top:390.72px;font-size:15px;color:#333;font-weight:normal;">10d</div>
<div style="left:408px;top:411.4px;width:50px;height:25.38px;background:#e8e8e8;"></div>
<div style="left:408px;top:436px;width:50px;height:1px;background:#d8d8d8;"></div>
<div class="t n" style="left:414px;top:416.10px;font-size:15px;color:#555;font-weight:normal;">6</div>
<div style="left:458px;top:411.4px;width:650px;height:25.38px;background:#ffffff;"></div>
<div style="left:521px;top:411.4px;width:1px;height:25.38px;background:#e4e4e4;"></div>
<div style="left:902px;top:411.4px;width:1px;height:25.38px;background:#e4e4e4;"></div>
<div style="left:1046px;top:411.4px;width:1px;height:25.38px;background:#e4e4e4;"></div>
<div style="left:458px;top:436px;width:650px;height:1px;background:#e2e2e2;"></div>
<div class="t n" style="left:463px;top:416.10px;font-size:15px;color:#333;font-weight:normal;">ST00...</div>
<div class="t n" style="left:596px;top:416.10px;font-size:15px;color:#333;font-weight:normal;">Perimeter Fence</div>
<div class="t n" style="left:574px;width:800px;text-align:center;top:416.10px;font-size:15px;color:#333;font-weight:normal;">3d</div>
<div class="t n" style="left:306px;width:800px;text-align:right;top:416.10px;font-size:15px;color:#333;font-weight:normal;">9:0</div>
<div style="left:408px;top:436.78px;width:50px;height:25.38px;background:#e8e8e8;"></div>
<div style="left:408px;top:461px;width:50px;height:1px;background:#d8d8d8;"></div>
<div class="t n" style="left:414px;top:441.48px;font-size:15px;color:#555;font-weight:normal;">7</div>
<div style="left:458px;top:436.78px;width:650px;height:25.38px;background:#ffffff;"></div>
<div style="left:521px;top:436.78px;width:1px;height:25.38px;background:#e4e4e4;"></div>
<div style="left:902px;top:436.78px;width:1px;height:25.38px;background:#e4e4e4;"></div>
<div style="left:1046px;top:436.78px;width:1px;height:25.38px;background:#e4e4e4;"></div>
<div style="left:458px;top:461px;width:650px;height:1px;background:#e2e2e2;"></div>
<div class="t n" style="left:463px;top:441.48px;font-size:15px;color:#333;font-weight:normal;">ST00...</div>
<div class="t n" style="left:596px;top:441.48px;font-size:15px;color:#333;font-weight:normal;">Temporary Hard Standing</div>
<div class="t n" style="left:574px;width:800px;text-align:center;top:441.48px;font-size:15px;color:#333;font-weight:normal;">1d</div>
<div class="t n" style="left:306px;width:800px;text-align:right;top:441.48px;font-size:15px;color:#333;font-weight:normal;">!</div>
<div style="left:408px;top:462.15999999999997px;width:50px;height:25.38px;background:#e8e8e8;"></div>
<div style="left:408px;top:487px;width:50px;height:1px;background:#d8d8d8;"></div>
<div class="t n" style="left:414px;top:466.86px;font-size:15px;color:#555;font-weight:normal;">8</div>
<div style="left:458px;top:462.15999999999997px;width:650px;height:25.38px;background:#ffffff;"></div>
<div style="left:521px;top:462.15999999999997px;width:1px;height:25.38px;background:#e4e4e4;"></div>
<div style="left:902px;top:462.15999999999997px;width:1px;height:25.38px;background:#e4e4e4;"></div>
<div style="left:1046px;top:462.15999999999997px;width:1px;height:25.38px;background:#e4e4e4;"></div>
<div style="left:458px;top:487px;width:650px;height:1px;background:#e2e2e2;"></div>
<div class="t n" style="left:463px;top:466.86px;font-size:15px;color:#333;font-weight:normal;">ST00...</div>
<div class="t n" style="left:596px;top:466.86px;font-size:15px;color:#333;font-weight:normal;">Field Office</div>
<div class="t n" style="left:574px;width:800px;text-align:center;top:466.86px;font-size:15px;color:#333;font-weight:normal;">2d</div>
<div class="t n" style="left:306px;width:800px;text-align:right;top:466.86px;font-size:15px;color:#333;font-weight:normal;">!</div>
<div style="left:408px;top:487.53999999999996px;width:50px;height:25.38px;background:#e8e8e8;"></div>
<div style="left:408px;top:512px;width:50px;height:1px;background:#d8d8d8;"></div>
<div class="t n" style="left:414px;top:492.24px;font-size:15px;color:#555;font-weight:normal;">9</div>
<div style="left:458px;top:487.53999999999996px;width:650px;height:25.38px;background:#c9d5de;"></div>
<svg style="position:absolute;left:552px;top:495.53999999999996px;" width="11" height="11" viewBox="0 0 11 11"><path d="M9 1 L9 9 L1 9 Z" fill="#555"/></svg>
<div class="t" style="left:570px;top:492.24px;font-size:15px;color:#3c3c3c;font-weight:bold;">Material Procurement</div>
<div class="t" style="left:574px;width:800px;text-align:center;top:492.24px;font-size:15px;color:#3c3c3c;font-weight:bold;">70d</div>
<div class="t n" style="left:306px;width:800px;text-align:right;top:492.24px;font-size:15px;color:#333;font-weight:normal;">9</div>
<div style="left:408px;top:512.92px;width:50px;height:25.38px;background:#e8e8e8;"></div>
<div style="left:408px;top:537px;width:50px;height:1px;background:#d8d8d8;"></div>
<div class="t n" style="left:414px;top:517.62px;font-size:15px;color:#555;font-weight:normal;">10</div>
<div style="left:458px;top:512.92px;width:650px;height:25.38px;background:#ffffff;"></div>
<div style="left:521px;top:512.92px;width:1px;height:25.38px;background:#e4e4e4;"></div>
<div style="left:902px;top:512.92px;width:1px;height:25.38px;background:#e4e4e4;"></div>
<div style="left:1046px;top:512.92px;width:1px;height:25.38px;background:#e4e4e4;"></div>
<div style="left:458px;top:537px;width:650px;height:1px;background:#e2e2e2;"></div>
<div class="t n" style="left:463px;top:517.62px;font-size:15px;color:#333;font-weight:normal;">ST00...</div>
<div class="t n" style="left:596px;top:517.62px;font-size:15px;color:#333;font-weight:normal;">Structural Steel</div>
<div class="t n" style="left:574px;width:800px;text-align:center;top:517.62px;font-size:15px;color:#333;font-weight:normal;">65d</div>
<div class="t n" style="left:306px;width:800px;text-align:right;top:517.62px;font-size:15px;color:#333;font-weight:normal;">!</div>
<div style="left:408px;top:538.3px;width:50px;height:25.38px;background:#e8e8e8;"></div>
<div style="left:408px;top:563px;width:50px;height:1px;background:#d8d8d8;"></div>
<div class="t n" style="left:414px;top:543.00px;font-size:15px;color:#555;font-weight:normal;">11</div>
<div style="left:458px;top:538.3px;width:650px;height:25.38px;background:#ffffff;"></div>
<div style="left:521px;top:538.3px;width:1px;height:25.38px;background:#e4e4e4;"></div>
<div style="left:902px;top:538.3px;width:1px;height:25.38px;background:#e4e4e4;"></div>
<div style="left:1046px;top:538.3px;width:1px;height:25.38px;background:#e4e4e4;"></div>
<div style="left:458px;top:563px;width:650px;height:1px;background:#e2e2e2;"></div>
<div class="t n" style="left:463px;top:543.00px;font-size:15px;color:#333;font-weight:normal;">ST00...</div>
<div class="t n" style="left:596px;top:543.00px;font-size:15px;color:#333;font-weight:normal;">Glass Curtain Wall</div>
<div class="t n" style="left:574px;width:800px;text-align:center;top:543.00px;font-size:15px;color:#333;font-weight:normal;">60d</div>
<div class="t n" style="left:306px;width:800px;text-align:right;top:543.00px;font-size:15px;color:#333;font-weight:normal;">!</div>
<div style="left:408px;top:563.6800000000001px;width:50px;height:25.38px;background:#e8e8e8;"></div>
<div style="left:408px;top:588px;width:50px;height:1px;background:#d8d8d8;"></div>
<div class="t n" style="left:414px;top:568.38px;font-size:15px;color:#555;font-weight:normal;">12</div>
<div style="left:458px;top:563.6800000000001px;width:650px;height:25.38px;background:#ffffff;"></div>
<div style="left:521px;top:563.6800000000001px;width:1px;height:25.38px;background:#e4e4e4;"></div>
<div style="left:902px;top:563.6800000000001px;width:1px;height:25.38px;background:#e4e4e4;"></div>
<div style="left:1046px;top:563.6800000000001px;width:1px;height:25.38px;background:#e4e4e4;"></div>
<div style="left:458px;top:588px;width:650px;height:1px;background:#e2e2e2;"></div>
<div class="t n" style="left:463px;top:568.38px;font-size:15px;color:#333;font-weight:normal;">ST00...</div>
<div class="t n" style="left:596px;top:568.38px;font-size:15px;color:#333;font-weight:normal;">Elevator</div>
<div class="t n" style="left:574px;width:800px;text-align:center;top:568.38px;font-size:15px;color:#333;font-weight:normal;">65d</div>
<div class="t n" style="left:306px;width:800px;text-align:right;top:568.38px;font-size:15px;color:#333;font-weight:normal;">!</div>
<div style="left:408px;top:589.06px;width:50px;height:25.38px;background:#e8e8e8;"></div>
<div style="left:408px;top:613px;width:50px;height:1px;background:#d8d8d8;"></div>
<div class="t n" style="left:414px;top:593.76px;font-size:15px;color:#555;font-weight:normal;">13</div>
<div style="left:458px;top:589.06px;width:650px;height:25.38px;background:#ffffff;"></div>
<div style="left:521px;top:589.06px;width:1px;height:25.38px;background:#e4e4e4;"></div>
<div style="left:902px;top:589.06px;width:1px;height:25.38px;background:#e4e4e4;"></div>
<div style="left:1046px;top:589.06px;width:1px;height:25.38px;background:#e4e4e4;"></div>
<div style="left:458px;top:613px;width:650px;height:1px;background:#e2e2e2;"></div>
<div class="t n" style="left:463px;top:593.76px;font-size:15px;color:#333;font-weight:normal;">ST00...</div>
<div class="t n" style="left:596px;top:593.76px;font-size:15px;color:#333;font-weight:normal;">MEP Equipment</div>
<div class="t n" style="left:574px;width:800px;text-align:center;top:593.76px;font-size:15px;color:#333;font-weight:normal;">70d</div>
<div class="t n" style="left:306px;width:800px;text-align:right;top:593.76px;font-size:15px;color:#333;font-weight:normal;">!</div>
<div style="left:408px;top:614.44px;width:50px;height:25.38px;background:#e8e8e8;"></div>
<div style="left:408px;top:639px;width:50px;height:1px;background:#d8d8d8;"></div>
<div class="t n" style="left:414px;top:619.14px;font-size:15px;color:#555;font-weight:normal;">14</div>
<div style="left:458px;top:614.44px;width:650px;height:25.38px;background:#c9d5de;"></div>
<svg style="position:absolute;left:552px;top:622.44px;" width="11" height="11" viewBox="0 0 11 11"><path d="M9 1 L9 9 L1 9 Z" fill="#555"/></svg>
<div class="t" style="left:570px;top:619.14px;font-size:15px;color:#3c3c3c;font-weight:bold;">Construction</div>
<div class="t" style="left:574px;width:800px;text-align:center;top:619.14px;font-size:15px;color:#3c3c3c;font-weight:bold;">257d</div>
<div style="left:408px;top:639.8199999999999px;width:50px;height:25.38px;background:#e8e8e8;"></div>
<div style="left:408px;top:664px;width:50px;height:1px;background:#d8d8d8;"></div>
<div class="t n" style="left:414px;top:644.52px;font-size:15px;color:#555;font-weight:normal;">15</div>
<div style="left:458px;top:639.8199999999999px;width:650px;height:25.38px;background:#90adc9;"></div>
<div style="left:521px;top:639.8199999999999px;width:1px;height:25.38px;background:#84a2bf;"></div>
<div style="left:902px;top:639.8199999999999px;width:1px;height:25.38px;background:#84a2bf;"></div>
<div style="left:1046px;top:639.8199999999999px;width:1px;height:25.38px;background:#84a2bf;"></div>
<svg style="position:absolute;left:577px;top:647.8199999999999px;" width="11" height="11" viewBox="0 0 11 11"><path d="M9 1 L9 9 L1 9 Z" fill="#4a5a6a"/></svg>
<div class="t" style="left:595px;top:644.52px;font-size:15px;color:#3c3c3c;font-weight:bold;">Site Construction</div>
<div class="t" style="left:574px;width:800px;text-align:center;top:644.52px;font-size:15px;color:#3c3c3c;font-weight:bold;">247d</div>
<div style="left:590px;top:360.14px;width:313px;height:26.38px;border:3px solid #1a1a1a;"></div>
<div style="left:1108px;top:231px;width:19px;height:437px;background:#ececec;"></div>
<div style="left:1109px;top:232px;width:17px;height:21px;background:#fff;border:1px solid #d8d8d8;"></div>
<svg style="position:absolute;left:1112px;top:237px;" width="12" height="10" viewBox="0 0 12 10"><path d="M1 8 L11 8 L6 2 Z" fill="#666"/></svg>
<div style="left:1109px;top:253px;width:17px;height:40px;background:#fff;border:1px solid #d8d8d8;"></div>
<div style="left:1109px;top:645px;width:17px;height:21px;background:#fff;border:1px solid #d8d8d8;"></div>
<svg style="position:absolute;left:1112px;top:650px;" width="12" height="10" viewBox="0 0 12 10"><path d="M1 2 L11 2 L6 8 Z" fill="#666"/></svg>
<div style="left:408px;top:666px;width:700px;height:20px;background:#ececec;"></div>
<div style="left:409px;top:667px;width:20px;height:18px;background:#fff;border:1px solid #d8d8d8;"></div>
<svg style="position:absolute;left:414px;top:670px;" width="10" height="12" viewBox="0 0 10 12"><path d="M7 1 L7 11 L2 6 Z" fill="#555"/></svg>
<div style="left:429px;top:667px;width:415px;height:18px;background:#fff;border:1px solid #e0e0e0;"></div>
<div style="left:1086px;top:667px;width:20px;height:18px;background:#fff;border:1px solid #d8d8d8;"></div>
<svg style="position:absolute;left:1091px;top:670px;" width="10" height="12" viewBox="0 0 10 12"><path d="M3 1 L3 11 L8 6 Z" fill="#555"/></svg>
<div style="left:1129px;top:227px;width:6px;height:460px;background:#f1f1f1;"></div>
<div style="left:1135px;top:229px;width:978px;height:458px;background:#ffffff;border:3px solid #737373;border-top-width:2px;border-bottom:2px solid #c8c8c8;border-right:2px solid #8a8a8a;"></div>
<svg style="position:absolute;left:1138px;top:231px;" width="972" height="432" viewBox="0 0 972 432"><line x1="9.9" y1="53" x2="9.9" y2="432" stroke="#f2f2f2" stroke-width="1.5"/><line x1="29.2" y1="53" x2="29.2" y2="432" stroke="#f2f2f2" stroke-width="1.5"/><line x1="48.5" y1="53" x2="48.5" y2="432" stroke="#f2f2f2" stroke-width="1.5"/><line x1="67.8" y1="53" x2="67.8" y2="432" stroke="#f2f2f2" stroke-width="1.5"/><line x1="87.1" y1="53" x2="87.1" y2="432" stroke="#f2f2f2" stroke-width="1.5"/><line x1="106.4" y1="53" x2="106.4" y2="432" stroke="#f2f2f2" stroke-width="1.5"/><line x1="125.7" y1="53" x2="125.7" y2="432" stroke="#f2f2f2" stroke-width="1.5"/><line x1="145.0" y1="53" x2="145.0" y2="432" stroke="#f2f2f2" stroke-width="1.5"/><line x1="164.3" y1="53" x2="164.3" y2="432" stroke="#f2f2f2" stroke-width="1.5"/><line x1="183.6" y1="53" x2="183.6" y2="432" stroke="#f2f2f2" stroke-width="1.5"/><line x1="202.9" y1="53" x2="202.9" y2="432" stroke="#f2f2f2" stroke-width="1.5"/><line x1="222.2" y1="53" x2="222.2" y2="432" stroke="#f2f2f2" stroke-width="1.5"/><line x1="241.5" y1="53" x2="241.5" y2="432" stroke="#f2f2f2" stroke-width="1.5"/><line x1="260.8" y1="53" x2="260.8" y2="432" stroke="#f2f2f2" stroke-width="1.5"/><line x1="280.1" y1="53" x2="280.1" y2="432" stroke="#f2f2f2" stroke-width="1.5"/><line x1="299.4" y1="53" x2="299.4" y2="432" stroke="#f2f2f2" stroke-width="1.5"/><line x1="318.7" y1="53" x2="318.7" y2="432" stroke="#f2f2f2" stroke-width="1.5"/><line x1="338.0" y1="53" x2="338.0" y2="432" stroke="#f2f2f2" stroke-width="1.5"/><line x1="357.3" y1="53" x2="357.3" y2="432" stroke="#f2f2f2" stroke-width="1.5"/><line x1="376.6" y1="53" x2="376.6" y2="432" stroke="#f2f2f2" stroke-width="1.5"/><line x1="395.9" y1="53" x2="395.9" y2="432" stroke="#f2f2f2" stroke-width="1.5"/><line x1="415.2" y1="53" x2="415.2" y2="432" stroke="#f2f2f2" stroke-width="1.5"/><line x1="434.5" y1="53" x2="434.5" y2="432" stroke="#f2f2f2" stroke-width="1.5"/><line x1="453.8" y1="53" x2="453.8" y2="432" stroke="#f2f2f2" stroke-width="1.5"/><line x1="473.1" y1="53" x2="473.1" y2="432" stroke="#f2f2f2" stroke-width="1.5"/><line x1="492.4" y1="53" x2="492.4" y2="432" stroke="#f2f2f2" stroke-width="1.5"/><line x1="511.7" y1="53" x2="511.7" y2="432" stroke="#f2f2f2" stroke-width="1.5"/><line x1="531.0" y1="53" x2="531.0" y2="432" stroke="#f2f2f2" stroke-width="1.5"/><line x1="550.3" y1="53" x2="550.3" y2="432" stroke="#f2f2f2" stroke-width="1.5"/><line x1="569.6" y1="53" x2="569.6" y2="432" stroke="#f2f2f2" stroke-width="1.5"/><line x1="588.9" y1="53" x2="588.9" y2="432" stroke="#f2f2f2" stroke-width="1.5"/><line x1="608.2" y1="53" x2="608.2" y2="432" stroke="#f2f2f2" stroke-width="1.5"/><line x1="627.5" y1="53" x2="627.5" y2="432" stroke="#f2f2f2" stroke-width="1.5"/><line x1="646.8" y1="53" x2="646.8" y2="432" stroke="#f2f2f2" stroke-width="1.5"/><line x1="666.1" y1="53" x2="666.1" y2="432" stroke="#f2f2f2" stroke-width="1.5"/><line x1="685.4" y1="53" x2="685.4" y2="432" stroke="#f2f2f2" stroke-width="1.5"/><line x1="704.7" y1="53" x2="704.7" y2="432" stroke="#f2f2f2" stroke-width="1.5"/><line x1="724.0" y1="53" x2="724.0" y2="432" stroke="#f2f2f2" stroke-width="1.5"/><line x1="743.3" y1="53" x2="743.3" y2="432" stroke="#f2f2f2" stroke-width="1.5"/><line x1="762.6" y1="53" x2="762.6" y2="432" stroke="#f2f2f2" stroke-width="1.5"/><line x1="781.9" y1="53" x2="781.9" y2="432" stroke="#f2f2f2" stroke-width="1.5"/><line x1="801.2" y1="53" x2="801.2" y2="432" stroke="#f2f2f2" stroke-width="1.5"/><line x1="820.5" y1="53" x2="820.5" y2="432" stroke="#f2f2f2" stroke-width="1.5"/><line x1="839.8" y1="53" x2="839.8" y2="432" stroke="#f2f2f2" stroke-width="1.5"/><line x1="859.1" y1="53" x2="859.1" y2="432" stroke="#f2f2f2" stroke-width="1.5"/><line x1="878.4" y1="53" x2="878.4" y2="432" stroke="#f2f2f2" stroke-width="1.5"/><line x1="897.7" y1="53" x2="897.7" y2="432" stroke="#f2f2f2" stroke-width="1.5"/><line x1="917.0" y1="53" x2="917.0" y2="432" stroke="#f2f2f2" stroke-width="1.5"/><line x1="936.3" y1="53" x2="936.3" y2="432" stroke="#f2f2f2" stroke-width="1.5"/><line x1="955.6" y1="53" x2="955.6" y2="432" stroke="#f2f2f2" stroke-width="1.5"/><line x1="48.5" y1="53" x2="48.5" y2="432" stroke="#e4e4e4" stroke-width="1.5"/><line x1="145.0" y1="53" x2="145.0" y2="432" stroke="#e4e4e4" stroke-width="1.5"/><line x1="222.2" y1="53" x2="222.2" y2="432" stroke="#e4e4e4" stroke-width="1.5"/><line x1="299.4" y1="53" x2="299.4" y2="432" stroke="#e4e4e4" stroke-width="1.5"/><line x1="395.9" y1="53" x2="395.9" y2="432" stroke="#e4e4e4" stroke-width="1.5"/><line x1="473.1" y1="53" x2="473.1" y2="432" stroke="#e4e4e4" stroke-width="1.5"/><line x1="550.3" y1="53" x2="550.3" y2="432" stroke="#e4e4e4" stroke-width="1.5"/><line x1="646.8" y1="53" x2="646.8" y2="432" stroke="#e4e4e4" stroke-width="1.5"/><line x1="724.0" y1="53" x2="724.0" y2="432" stroke="#e4e4e4" stroke-width="1.5"/><line x1="820.5" y1="53" x2="820.5" y2="432" stroke="#e4e4e4" stroke-width="1.5"/><line x1="897.7" y1="53" x2="897.7" y2="432" stroke="#e4e4e4" stroke-width="1.5"/><line x1="0" y1="53.5" x2="972" y2="53.5" stroke="#eaeaea" stroke-width="1.5"/><line x1="0" y1="78.9" x2="972" y2="78.9" stroke="#eaeaea" stroke-width="1.5"/><line x1="0" y1="104.3" x2="972" y2="104.3" stroke="#eaeaea" stroke-width="1.5"/><line x1="0" y1="129.6" x2="972" y2="129.6" stroke="#eaeaea" stroke-width="1.5"/><line x1="0" y1="155.0" x2="972" y2="155.0" stroke="#eaeaea" stroke-width="1.5"/><line x1="0" y1="180.4" x2="972" y2="180.4" stroke="#eaeaea" stroke-width="1.5"/><line x1="0" y1="205.8" x2="972" y2="205.8" stroke="#eaeaea" stroke-width="1.5"/><line x1="0" y1="231.2" x2="972" y2="231.2" stroke="#eaeaea" stroke-width="1.5"/><line x1="0" y1="256.5" x2="972" y2="256.5" stroke="#eaeaea" stroke-width="1.5"/><line x1="0" y1="281.9" x2="972" y2="281.9" stroke="#eaeaea" stroke-width="1.5"/><line x1="0" y1="307.3" x2="972" y2="307.3" stroke="#eaeaea" stroke-width="1.5"/><line x1="0" y1="332.7" x2="972" y2="332.7" stroke="#eaeaea" stroke-width="1.5"/><line x1="0" y1="358.1" x2="972" y2="358.1" stroke="#eaeaea" stroke-width="1.5"/><line x1="0" y1="383.4" x2="972" y2="383.4" stroke="#eaeaea" stroke-width="1.5"/><line x1="0" y1="408.8" x2="972" y2="408.8" stroke="#eaeaea" stroke-width="1.5"/><line x1="0" y1="434.2" x2="972" y2="434.2" stroke="#eaeaea" stroke-width="1.5"/><line x1="0" y1="17.599999999999994" x2="972" y2="17.599999999999994" stroke="#737373" stroke-width="2"/><line x1="0" y1="34.19999999999999" x2="972" y2="34.19999999999999" stroke="#737373" stroke-width="2"/><line x1="0" y1="52.80000000000001" x2="972" y2="52.80000000000001" stroke="#d0d0d0" stroke-width="1.5"/><line x1="48.5" y1="17.599999999999994" x2="48.5" y2="52.80000000000001" stroke="#737373" stroke-width="2"/><line x1="145.0" y1="17.599999999999994" x2="145.0" y2="52.80000000000001" stroke="#737373" stroke-width="2"/><line x1="222.2" y1="0" x2="222.2" y2="52.80000000000001" stroke="#737373" stroke-width="2"/><line x1="299.4" y1="17.599999999999994" x2="299.4" y2="52.80000000000001" stroke="#737373" stroke-width="2"/><line x1="395.9" y1="17.599999999999994" x2="395.9" y2="52.80000000000001" stroke="#737373" stroke-width="2"/><line x1="473.1" y1="0" x2="473.1" y2="52.80000000000001" stroke="#737373" stroke-width="2"/><line x1="550.3" y1="17.599999999999994" x2="550.3" y2="52.80000000000001" stroke="#737373" stroke-width="2"/><line x1="646.8" y1="17.599999999999994" x2="646.8" y2="52.80000000000001" stroke="#737373" stroke-width="2"/><line x1="724.0" y1="0" x2="724.0" y2="52.80000000000001" stroke="#737373" stroke-width="2"/><line x1="820.5" y1="17.599999999999994" x2="820.5" y2="52.80000000000001" stroke="#737373" stroke-width="2"/><line x1="897.7" y1="17.599999999999994" x2="897.7" y2="52.80000000000001" stroke="#737373" stroke-width="2"/><rect x="0" y="129.1" width="972" height="25.9" fill="#fff24f"/><rect x="0.0" y="61.2" width="972.0" height="6.5" fill="#262626"/><rect x="0.0" y="86.6" width="48.5" height="6.5" fill="#262626"/><path d="M37.5 92.6 L48.5 92.6 L42.5 97.6 Z" fill="#262626"/><rect x="43.0" y="94.1" width="929.0" height="7" fill="#e2ecf6" stroke="#3a3a3a" stroke-width="1.2"/><rect x="0.0" y="134.8" width="43.3" height="15" fill="#00d20a" stroke="#2a4a2a" stroke-width="1.3"/><rect x="0.0" y="160.7" width="4.6" height="14" fill="#00d20a" stroke="#2a4a2a" stroke-width="1.3"/><path d="M14 186.1 L25 193.1 L14 200.1 Z" fill="none" stroke="#9bb4dc" stroke-width="1.3"/><rect x="31.5" y="185.6" width="7.5" height="15" fill="#00d20a" stroke="#2a4a2a" stroke-width="1.3"/><rect x="40.0" y="236.3" width="5.0" height="15" fill="#00d20a" stroke="#2a4a2a" stroke-width="1.3"/><rect x="43.0" y="244.8" width="929.0" height="7" fill="#e2ecf6" stroke="#3a3a3a" stroke-width="1.2"/><rect x="4.4" y="264.2" width="276.3" height="6.5" fill="#262626"/><path d="M4.4 270.2 L15.4 270.2 L9.4 275.2 Z" fill="#262626"/><path d="M269.7 270.2 L280.7 270.2 L274.7 275.2 Z" fill="#262626"/><path d="M272.0 274.2 L782.0 274.2 L782.0 271.2 L788.0 277.2 L782.0 283.2 L782.0 280.2 L272.0 280.2 Z" fill="#e2ecf6" stroke="#3a3a3a" stroke-width="1.2"/><rect x="13.5" y="287.1" width="242.7" height="15" fill="#00d20a" stroke="#2a4a2a" stroke-width="1.3"/><rect x="13.5" y="312.5" width="223.1" height="15" fill="#00d20a" stroke="#2a4a2a" stroke-width="1.3"/><path d="M237.0 322.5 L501.0 322.5 L501.0 319.5 L507.0 325.5 L501.0 331.5 L501.0 328.5 L237.0 328.5 Z" fill="#e2ecf6" stroke="#3a3a3a" stroke-width="1.2"/><rect x="13.5" y="337.9" width="242.7" height="15" fill="#00d20a" stroke="#2a4a2a" stroke-width="1.3"/><rect x="256.0" y="347.4" width="259.0" height="7" fill="#e2ecf6" stroke="#3a3a3a" stroke-width="1.2"/><rect x="11.4" y="363.2" width="263.1" height="15" fill="#00d20a" stroke="#2a4a2a" stroke-width="1.3"/><path d="M275.0 373.2 L782.0 373.2 L782.0 370.2 L788.0 376.2 L782.0 382.2 L782.0 379.2 L275.0 379.2 Z" fill="#e2ecf6" stroke="#3a3a3a" stroke-width="1.2"/><path d="M507 319 L513 319 L513 432" fill="none" stroke="#444" stroke-width="1.3"/><path d="M515 344 L518 344 L518 432" fill="none" stroke="#444" stroke-width="1.3"/><path d="M788 369 L972 369" fill="none" stroke="#444" stroke-width="1.3"/><line x1="788" y1="369" x2="788" y2="432" stroke="#333" stroke-width="1.6"/><line x1="866" y1="369" x2="866" y2="432" stroke="#333" stroke-width="1.6"/><line x1="904" y1="369" x2="904" y2="432" stroke="#333" stroke-width="1.6"/><line x1="924" y1="369" x2="924" y2="432" stroke="#333" stroke-width="1.6"/><line x1="943" y1="369" x2="943" y2="432" stroke="#333" stroke-width="1.6"/><rect x="44.4" y="391.1" width="927.6" height="6.5" fill="#262626"/><path d="M44.4 397.1 L55.4 397.1 L49.4 402.1 Z" fill="#262626"/><rect x="44.4" y="416.5" width="927.6" height="6.5" fill="#262626"/><path d="M44.4 422.5 L55.4 422.5 L49.4 427.5 Z" fill="#262626"/><path d="M5 167.7 L30 167.7 L30 177.7" fill="none" stroke="#2f62c0" stroke-width="2"/><line x1="12" y1="167.7" x2="12" y2="352" stroke="#2f62c0" stroke-width="2.8"/><path d="M43 143.3 L50 143.3 L50 432" fill="none" stroke="#2f62c0" stroke-width="2.8"/><path d="M256 295.6 L262 295.6 L262 432" fill="none" stroke="#2f62c0" stroke-width="2.4"/><path d="M30 177 L34 201 M36 206 L40 231 L42 250" fill="none" stroke="#222" stroke-width="2.2"/><circle cx="30" cy="179" r="2.6" fill="#222"/><circle cx="36" cy="206" r="2.6" fill="#222"/><circle cx="39" cy="230" r="2.6" fill="#222"/><circle cx="12" cy="285.6" r="2.2" fill="#223"/><circle cx="12" cy="311.0" r="2.2" fill="#223"/><circle cx="12" cy="336.4" r="2.2" fill="#223"/><circle cx="12" cy="361.8" r="2.2" fill="#223"/><path d="M45 426 L55 426 L50 432 Z" fill="#222"/></svg>
<div class="t n" style="left:1143px;top:233.38px;font-size:15.5px;color:#333;font-weight:normal;">Jan 2016</div>
<div class="t n" style="left:1361px;top:233.38px;font-size:15.5px;color:#333;font-weight:normal;">Apr</div>
<div class="t n" style="left:1612px;top:233.38px;font-size:15.5px;color:#333;font-weight:normal;">Jul</div>
<div class="t n" style="left:1862px;top:233.38px;font-size:15.5px;color:#333;font-weight:normal;">Oct</div>
<div class="t n" style="left:1188.5px;top:249.88px;font-size:15.5px;color:#333;font-weight:normal;">Feb</div>
<div class="t n" style="left:1285.0px;top:249.88px;font-size:15.5px;color:#333;font-weight:normal;">Mar</div>
<div class="t n" style="left:1439.4px;top:249.88px;font-size:15.5px;color:#333;font-weight:normal;">May</div>
<div class="t n" style="left:1535.9px;top:249.88px;font-size:15.5px;color:#333;font-weight:normal;">Jun</div>
<div class="t n" style="left:1690.3px;top:249.88px;font-size:15.5px;color:#333;font-weight:normal;">Aug</div>
<div class="t n" style="left:1786.8000000000002px;top:249.88px;font-size:15.5px;color:#333;font-weight:normal;">Sep</div>
<div class="t n" style="left:1960.5px;top:249.88px;font-size:15.5px;color:#333;font-weight:normal;">Nov</div>
<div class="t n" style="left:2037.7px;top:249.88px;font-size:15.5px;color:#333;font-weight:normal;">Dec</div>
<div class="t n" style="left:1188.5px;top:267.88px;font-size:15.5px;color:#333;font-weight:normal;">wk 5</div>
<div class="t n" style="left:1285.0px;top:267.88px;font-size:15.5px;color:#333;font-weight:normal;">wk 10</div>
<div class="t n" style="left:1362.2px;top:267.88px;font-size:15.5px;color:#333;font-weight:normal;">wk 14</div>
<div class="t n" style="left:1439.4px;top:267.88px;font-size:15.5px;color:#333;font-weight:normal;">wk 18</div>
<div class="t n" style="left:1535.9px;top:267.88px;font-size:15.5px;color:#333;font-weight:normal;">wk 23</div>
<div class="t n" style="left:1613.1px;top:267.88px;font-size:15.5px;color:#333;font-weight:normal;">wk 27</div>
<div class="t n" style="left:1690.3px;top:267.88px;font-size:15.5px;color:#333;font-weight:normal;">wk 31</div>
<div class="t n" style="left:1786.8000000000002px;top:267.88px;font-size:15.5px;color:#333;font-weight:normal;">wk 36</div>
<div class="t n" style="left:1864.0px;top:267.88px;font-size:15.5px;color:#333;font-weight:normal;">wk 40</div>
<div class="t n" style="left:1960.5px;top:267.88px;font-size:15.5px;color:#333;font-weight:normal;">wk 45</div>
<div class="t n" style="left:2037.7px;top:267.88px;font-size:15.5px;color:#333;font-weight:normal;">wk 49</div>
<div style="left:1138px;top:231px;width:972px;height:432px;overflow:hidden;">
<div class="t" style="left:54.9px;top:80.0px;font-size:16.4px;color:#555;">Pre Construction</div>
<div class="t" style="left:-13.0px;top:105.4px;font-size:16.4px;color:#333;">Notice to Proceed</div>
<div class="t" style="left:54.5px;top:130.8px;font-size:16.4px;color:#5c5612;">Building Permit</div>
<div class="t" style="left:17.5px;top:156.1px;font-size:16.4px;color:#444;">Award Subcontractors</div>
<div class="t" style="left:50.0px;top:181.5px;font-size:16.4px;color:#444;">Perimeter Fence</div>
<div class="t" style="left:49.0px;top:206.9px;font-size:16.4px;color:#444;">Temporary Hard Standing</div>
<div class="t" style="left:54.0px;top:232.3px;font-size:16.4px;color:#333;">Field Office</div>
<div class="t" style="left:286.8px;top:257.7px;font-size:16.4px;color:#666;">Material Procurement</div>
<div class="t" style="left:267.2px;top:283.0px;font-size:16.4px;color:#444;">Structural Steel</div>
<div class="t" style="left:247.6px;top:308.4px;font-size:16.4px;color:#444;">Glass Curtain Wall</div>
<div class="t" style="left:267.2px;top:333.8px;font-size:16.4px;color:#333;">Elevator</div>
<div class="t" style="left:285.5px;top:359.2px;font-size:16.4px;color:#333;">MEP Equipment</div>
</div>
<div style="left:1138px;top:663px;width:972px;height:22px;background:#f0f0f0;"></div>
<div style="left:1180px;top:674px;width:727px;height:2.5px;background:#9a9a9a;"></div>
<div style="left:2113px;top:227px;width:11px;height:1013px;background:#eaeaea;"></div>
<div style="left:2118px;top:227px;width:2px;height:1013px;background:#d0d0d0;"></div>
<div style="left:406px;top:686px;width:1707px;height:34px;background:#ebebeb;"></div>
<div style="left:474px;top:690px;width:51px;height:27px;background:#ffffff;border:1px solid #e2e2e2;"></div>
<div class="t n" style="left:411.5px;top:696.10px;font-size:15px;color:#555;font-weight:normal;">Support</div>
<div class="t n" style="left:481.2px;top:694.96px;font-size:14.7px;color:#555;font-weight:normal;">Gantt</div>
<div style="left:406px;top:720px;width:1707px;height:6px;background:#d2d2d2;"></div>
<div style="left:405px;top:726px;width:1708px;height:46px;background:#e6e6e6;"></div>
<div class="t n" style="left:410.5px;top:737.71px;font-size:23.5px;color:#3c6db5;font-weight:normal;">3D Using Dates [Best] Colors [Appearance Profiles]</div>
<div class="t n" style="left:961px;top:737.71px;font-size:23.5px;color:#3c6db5;font-weight:normal;">[1350x395]</div>
<svg style="position:absolute;left:2044px;top:744px;" width="14" height="10" viewBox="0 0 14 10"><path d="M1 2 L12 2 L6.5 8 Z" fill="#555"/></svg>
<svg style="position:absolute;left:2068px;top:740px;" width="14" height="16" viewBox="0 0 14 16"><path d="M4 2 L10 2 L10 9 L4 9 Z M2 9 L12 9 M7 9 L7 14" fill="none" stroke="#555" stroke-width="1.4"/></svg>
<svg style="position:absolute;left:2092px;top:742px;" width="14" height="14" viewBox="0 0 14 14"><path d="M2 2 L11 11 M11 2 L2 11" stroke="#555" stroke-width="1.6"/></svg>
<div style="left:405px;top:772px;width:1708px;height:468px;background:linear-gradient(to bottom,#a8c4e6 0%,#bbd0ea 25%,#d1dfef 50%,#e3ebf6 75%,#ebf0f7 87%,#e4e7ea 91.5%,#dfe1e4 95%,#d8d9dc 100%);"></div>
<div style="left:397px;top:726px;width:8px;height:514px;background:#ededed;"></div>
<div style="left:2112px;top:726px;width:12px;height:514px;background:#e9e9e9;"></div>
<div style="left:2120px;top:726px;width:2px;height:514px;background:#d4d4d4;"></div>
<svg style="position:absolute;left:0px;top:0px;pointer-events:none;" width="2124" height="1240" viewBox="0 0 2124 1240"><line x1="730.6" y1="1021.4" x2="745.8" y2="1101.0" stroke="#eef0f3" stroke-width="3.0" stroke-linecap="butt"/><line x1="728.0" y1="1021.4" x2="743.2" y2="1101.0" stroke="#717377" stroke-width="3.6" stroke-linecap="butt"/><line x1="737.3" y1="1019.7" x2="753.4" y2="1102.7" stroke="#eef0f3" stroke-width="3.0" stroke-linecap="butt"/><line x1="734.7" y1="1019.7" x2="750.8" y2="1102.7" stroke="#717377" stroke-width="3.6" stroke-linecap="butt"/><line x1="745.8" y1="1023.9" x2="761.1" y2="1095.1" stroke="#eef0f3" stroke-width="3.0" stroke-linecap="butt"/><line x1="743.2" y1="1023.9" x2="758.5" y2="1095.1" stroke="#717377" stroke-width="3.6" stroke-linecap="butt"/><line x1="756.8" y1="1029.0" x2="772.1" y2="1110.3" stroke="#eef0f3" stroke-width="3.0" stroke-linecap="butt"/><line x1="754.2" y1="1029.0" x2="769.5" y2="1110.3" stroke="#717377" stroke-width="3.6" stroke-linecap="butt"/><line x1="764.5" y1="1023.9" x2="780.6" y2="1112.9" stroke="#eef0f3" stroke-width="3.0" stroke-linecap="butt"/><line x1="761.9" y1="1023.9" x2="778.0" y2="1112.9" stroke="#717377" stroke-width="3.6" stroke-linecap="butt"/><line x1="775.5" y1="1026.4" x2="787.3" y2="1105.3" stroke="#eef0f3" stroke-width="3.0" stroke-linecap="butt"/><line x1="772.9" y1="1026.4" x2="784.7" y2="1105.3" stroke="#717377" stroke-width="3.6" stroke-linecap="butt"/><line x1="780.6" y1="1025.6" x2="795.8" y2="1107.8" stroke="#eef0f3" stroke-width="3.0" stroke-linecap="butt"/><line x1="778.0" y1="1025.6" x2="793.2" y2="1107.8" stroke="#717377" stroke-width="3.6" stroke-linecap="butt"/><line x1="814.5" y1="1045.9" x2="828.9" y2="1132.4" stroke="#eef0f3" stroke-width="3.0" stroke-linecap="butt"/><line x1="811.9" y1="1045.9" x2="826.3" y2="1132.4" stroke="#717377" stroke-width="3.6" stroke-linecap="butt"/><line x1="821.2" y1="1040.8" x2="838.2" y2="1134.9" stroke="#eef0f3" stroke-width="3.0" stroke-linecap="butt"/><line x1="818.6" y1="1040.8" x2="835.6" y2="1134.9" stroke="#717377" stroke-width="3.6" stroke-linecap="butt"/><line x1="831.4" y1="1042.5" x2="845.0" y2="1125.6" stroke="#eef0f3" stroke-width="3.0" stroke-linecap="butt"/><line x1="828.8" y1="1042.5" x2="842.4" y2="1125.6" stroke="#717377" stroke-width="3.6" stroke-linecap="butt"/><line x1="839.0" y1="1040.8" x2="854.3" y2="1129.8" stroke="#eef0f3" stroke-width="3.0" stroke-linecap="butt"/><line x1="836.4" y1="1040.8" x2="851.7" y2="1129.8" stroke="#717377" stroke-width="3.6" stroke-linecap="butt"/><line x1="845.8" y1="1042.5" x2="850.1" y2="1068.0" stroke="#eef0f3" stroke-width="3.0" stroke-linecap="butt"/><line x1="843.2" y1="1042.5" x2="847.5" y2="1068.0" stroke="#717377" stroke-width="3.6" stroke-linecap="butt"/><line x1="853.4" y1="1044.2" x2="862.8" y2="1079.8" stroke="#eef0f3" stroke-width="3.0" stroke-linecap="butt"/><line x1="850.8" y1="1044.2" x2="860.2" y2="1079.8" stroke="#717377" stroke-width="3.6" stroke-linecap="butt"/><line x1="865.3" y1="1047.6" x2="872.1" y2="1082.4" stroke="#eef0f3" stroke-width="3.0" stroke-linecap="butt"/><line x1="862.7" y1="1047.6" x2="869.5" y2="1082.4" stroke="#717377" stroke-width="3.6" stroke-linecap="butt"/><line x1="881.4" y1="1064.6" x2="895.0" y2="1157.0" stroke="#eef0f3" stroke-width="3.0" stroke-linecap="butt"/><line x1="878.8" y1="1064.6" x2="892.4" y2="1157.0" stroke="#717377" stroke-width="3.6" stroke-linecap="butt"/><line x1="889.9" y1="1057.8" x2="905.1" y2="1159.5" stroke="#eef0f3" stroke-width="3.0" stroke-linecap="butt"/><line x1="887.3" y1="1057.8" x2="902.5" y2="1159.5" stroke="#717377" stroke-width="3.6" stroke-linecap="butt"/><line x1="897.5" y1="1061.2" x2="910.2" y2="1149.3" stroke="#eef0f3" stroke-width="3.0" stroke-linecap="butt"/><line x1="894.9" y1="1061.2" x2="907.6" y2="1149.3" stroke="#717377" stroke-width="3.6" stroke-linecap="butt"/><line x1="907.7" y1="1059.5" x2="920.4" y2="1154.4" stroke="#eef0f3" stroke-width="3.0" stroke-linecap="butt"/><line x1="905.1" y1="1059.5" x2="917.8" y2="1154.4" stroke="#717377" stroke-width="3.6" stroke-linecap="butt"/><line x1="915.3" y1="1061.2" x2="921.2" y2="1097.6" stroke="#eef0f3" stroke-width="3.0" stroke-linecap="butt"/><line x1="912.7" y1="1061.2" x2="918.6" y2="1097.6" stroke="#717377" stroke-width="3.6" stroke-linecap="butt"/><line x1="924.6" y1="1064.6" x2="930.6" y2="1100.2" stroke="#eef0f3" stroke-width="3.0" stroke-linecap="butt"/><line x1="922.0" y1="1064.6" x2="928.0" y2="1100.2" stroke="#717377" stroke-width="3.6" stroke-linecap="butt"/><line x1="937.3" y1="1068.0" x2="942.4" y2="1095.9" stroke="#eef0f3" stroke-width="3.0" stroke-linecap="butt"/><line x1="934.7" y1="1068.0" x2="939.8" y2="1095.9" stroke="#717377" stroke-width="3.6" stroke-linecap="butt"/><line x1="967.1" y1="1087.1" x2="978.4" y2="1188.7" stroke="#eef0f3" stroke-width="3.0" stroke-linecap="butt"/><line x1="964.5" y1="1087.1" x2="975.8" y2="1188.7" stroke="#717377" stroke-width="3.6" stroke-linecap="butt"/><line x1="980.6" y1="1087.0" x2="990.8" y2="1191.0" stroke="#eef0f3" stroke-width="3.0" stroke-linecap="butt"/><line x1="978.0" y1="1087.0" x2="988.2" y2="1191.0" stroke="#717377" stroke-width="3.6" stroke-linecap="butt"/><line x1="994.2" y1="1084.9" x2="1005.5" y2="1184.2" stroke="#eef0f3" stroke-width="3.0" stroke-linecap="butt"/><line x1="991.6" y1="1084.9" x2="1002.9" y2="1184.2" stroke="#717377" stroke-width="3.6" stroke-linecap="butt"/><line x1="1002.1" y1="1073.6" x2="1007.8" y2="1114.2" stroke="#eef0f3" stroke-width="3.0" stroke-linecap="butt"/><line x1="999.5" y1="1073.6" x2="1005.2" y2="1114.2" stroke="#717377" stroke-width="3.6" stroke-linecap="butt"/><line x1="1012.0" y1="1060.0" x2="1015.0" y2="1077.0" stroke="#f4f5f7" stroke-width="5.5" stroke-linecap="butt"/><line x1="1009.6" y1="1060.0" x2="1012.6" y2="1077.0" stroke="#9c9ea2" stroke-width="1.6" stroke-linecap="butt"/><line x1="1014.6" y1="1060.0" x2="1017.6" y2="1077.0" stroke="#b8babe" stroke-width="1.2" stroke-linecap="butt"/><line x1="1022.0" y1="1059.0" x2="1025.0" y2="1078.0" stroke="#f4f5f7" stroke-width="5.5" stroke-linecap="butt"/><line x1="1019.6" y1="1059.0" x2="1022.6" y2="1078.0" stroke="#9c9ea2" stroke-width="1.6" stroke-linecap="butt"/><line x1="1024.6" y1="1059.0" x2="1027.6" y2="1078.0" stroke="#b8babe" stroke-width="1.2" stroke-linecap="butt"/><line x1="1032.0" y1="1057.0" x2="1035.0" y2="1081.0" stroke="#f4f5f7" stroke-width="5.5" stroke-linecap="butt"/><line x1="1029.6" y1="1057.0" x2="1032.6" y2="1081.0" stroke="#9c9ea2" stroke-width="1.6" stroke-linecap="butt"/><line x1="1034.6" y1="1057.0" x2="1037.6" y2="1081.0" stroke="#b8babe" stroke-width="1.2" stroke-linecap="butt"/><line x1="1041.0" y1="1055.0" x2="1044.0" y2="1075.0" stroke="#f4f5f7" stroke-width="5.5" stroke-linecap="butt"/><line x1="1038.6" y1="1055.0" x2="1041.6" y2="1075.0" stroke="#9c9ea2" stroke-width="1.6" stroke-linecap="butt"/><line x1="1043.6" y1="1055.0" x2="1046.6" y2="1075.0" stroke="#b8babe" stroke-width="1.2" stroke-linecap="butt"/><line x1="1055.0" y1="1051.0" x2="1063.0" y2="1142.0" stroke="#f4f5f7" stroke-width="5.5" stroke-linecap="butt"/><line x1="1052.6" y1="1051.0" x2="1060.6" y2="1142.0" stroke="#9c9ea2" stroke-width="1.6" stroke-linecap="butt"/><line x1="1057.6" y1="1051.0" x2="1065.6" y2="1142.0" stroke="#b8babe" stroke-width="1.2" stroke-linecap="butt"/><line x1="1068.0" y1="1051.0" x2="1076.0" y2="1146.0" stroke="#f4f5f7" stroke-width="5.5" stroke-linecap="butt"/><line x1="1065.6" y1="1051.0" x2="1073.6" y2="1146.0" stroke="#9c9ea2" stroke-width="1.6" stroke-linecap="butt"/><line x1="1070.6" y1="1051.0" x2="1078.6" y2="1146.0" stroke="#b8babe" stroke-width="1.2" stroke-linecap="butt"/><line x1="1081.0" y1="1048.0" x2="1088.0" y2="1140.0" stroke="#f4f5f7" stroke-width="5.5" stroke-linecap="butt"/><line x1="1078.6" y1="1048.0" x2="1085.6" y2="1140.0" stroke="#9c9ea2" stroke-width="1.6" stroke-linecap="butt"/><line x1="1083.6" y1="1048.0" x2="1090.6" y2="1140.0" stroke="#b8babe" stroke-width="1.2" stroke-linecap="butt"/><line x1="1065.0" y1="1051.0" x2="1067.0" y2="1085.0" stroke="#f4f5f7" stroke-width="5.5" stroke-linecap="butt"/><line x1="1062.6" y1="1051.0" x2="1064.6" y2="1085.0" stroke="#9c9ea2" stroke-width="1.6" stroke-linecap="butt"/><line x1="1067.6" y1="1051.0" x2="1069.6" y2="1085.0" stroke="#b8babe" stroke-width="1.2" stroke-linecap="butt"/><line x1="1089.0" y1="1033.0" x2="1091.0" y2="1069.0" stroke="#f4f5f7" stroke-width="5.5" stroke-linecap="butt"/><line x1="1086.6" y1="1033.0" x2="1088.6" y2="1069.0" stroke="#9c9ea2" stroke-width="1.6" stroke-linecap="butt"/><line x1="1091.6" y1="1033.0" x2="1093.6" y2="1069.0" stroke="#b8babe" stroke-width="1.2" stroke-linecap="butt"/><line x1="1099.0" y1="1031.0" x2="1101.0" y2="1072.0" stroke="#f4f5f7" stroke-width="5.5" stroke-linecap="butt"/><line x1="1096.6" y1="1031.0" x2="1098.6" y2="1072.0" stroke="#9c9ea2" stroke-width="1.6" stroke-linecap="butt"/><line x1="1101.6" y1="1031.0" x2="1103.6" y2="1072.0" stroke="#b8babe" stroke-width="1.2" stroke-linecap="butt"/><line x1="1109.0" y1="1030.0" x2="1110.0" y2="1069.0" stroke="#f4f5f7" stroke-width="5.5" stroke-linecap="butt"/><line x1="1106.6" y1="1030.0" x2="1107.6" y2="1069.0" stroke="#9c9ea2" stroke-width="1.6" stroke-linecap="butt"/><line x1="1111.6" y1="1030.0" x2="1112.6" y2="1069.0" stroke="#b8babe" stroke-width="1.2" stroke-linecap="butt"/><line x1="1122.0" y1="1022.0" x2="1124.0" y2="1053.0" stroke="#f4f5f7" stroke-width="5.5" stroke-linecap="butt"/><line x1="1119.6" y1="1022.0" x2="1121.6" y2="1053.0" stroke="#9c9ea2" stroke-width="1.6" stroke-linecap="butt"/><line x1="1124.6" y1="1022.0" x2="1126.6" y2="1053.0" stroke="#b8babe" stroke-width="1.2" stroke-linecap="butt"/><line x1="1132.0" y1="1025.0" x2="1133.0" y2="1107.0" stroke="#f4f5f7" stroke-width="5.5" stroke-linecap="butt"/><line x1="1129.6" y1="1025.0" x2="1130.6" y2="1107.0" stroke="#9c9ea2" stroke-width="1.6" stroke-linecap="butt"/><line x1="1134.6" y1="1025.0" x2="1135.6" y2="1107.0" stroke="#b8babe" stroke-width="1.2" stroke-linecap="butt"/><line x1="1144.0" y1="1022.0" x2="1145.0" y2="1110.0" stroke="#f4f5f7" stroke-width="5.5" stroke-linecap="butt"/><line x1="1141.6" y1="1022.0" x2="1142.6" y2="1110.0" stroke="#9c9ea2" stroke-width="1.6" stroke-linecap="butt"/><line x1="1146.6" y1="1022.0" x2="1147.6" y2="1110.0" stroke="#b8babe" stroke-width="1.2" stroke-linecap="butt"/><line x1="1154.0" y1="1020.0" x2="1156.0" y2="1104.0" stroke="#f4f5f7" stroke-width="5.5" stroke-linecap="butt"/><line x1="1151.6" y1="1020.0" x2="1153.6" y2="1104.0" stroke="#9c9ea2" stroke-width="1.6" stroke-linecap="butt"/><line x1="1156.6" y1="1020.0" x2="1158.6" y2="1104.0" stroke="#b8babe" stroke-width="1.2" stroke-linecap="butt"/><line x1="1161.0" y1="1008.0" x2="1166.0" y2="1090.0" stroke="#f4f5f7" stroke-width="5.5" stroke-linecap="butt"/><line x1="1158.6" y1="1008.0" x2="1163.6" y2="1090.0" stroke="#9c9ea2" stroke-width="1.6" stroke-linecap="butt"/><line x1="1163.6" y1="1008.0" x2="1168.6" y2="1090.0" stroke="#b8babe" stroke-width="1.2" stroke-linecap="butt"/><line x1="1170.0" y1="1010.0" x2="1177.0" y2="1092.0" stroke="#f4f5f7" stroke-width="5.5" stroke-linecap="butt"/><line x1="1167.6" y1="1010.0" x2="1174.6" y2="1092.0" stroke="#9c9ea2" stroke-width="1.6" stroke-linecap="butt"/><line x1="1172.6" y1="1010.0" x2="1179.6" y2="1092.0" stroke="#b8babe" stroke-width="1.2" stroke-linecap="butt"/><line x1="1182.0" y1="1006.0" x2="1186.0" y2="1088.0" stroke="#f4f5f7" stroke-width="5.5" stroke-linecap="butt"/><line x1="1179.6" y1="1006.0" x2="1183.6" y2="1088.0" stroke="#9c9ea2" stroke-width="1.6" stroke-linecap="butt"/><line x1="1184.6" y1="1006.0" x2="1188.6" y2="1088.0" stroke="#b8babe" stroke-width="1.2" stroke-linecap="butt"/><line x1="1196.0" y1="997.0" x2="1197.0" y2="1075.0" stroke="#f4f5f7" stroke-width="5.5" stroke-linecap="butt"/><line x1="1193.6" y1="997.0" x2="1194.6" y2="1075.0" stroke="#9c9ea2" stroke-width="1.6" stroke-linecap="butt"/><line x1="1198.6" y1="997.0" x2="1199.6" y2="1075.0" stroke="#b8babe" stroke-width="1.2" stroke-linecap="butt"/><line x1="1205.0" y1="995.0" x2="1208.0" y2="1078.0" stroke="#f4f5f7" stroke-width="5.5" stroke-linecap="butt"/><line x1="1202.6" y1="995.0" x2="1205.6" y2="1078.0" stroke="#9c9ea2" stroke-width="1.6" stroke-linecap="butt"/><line x1="1207.6" y1="995.0" x2="1210.6" y2="1078.0" stroke="#b8babe" stroke-width="1.2" stroke-linecap="butt"/><line x1="1214.0" y1="995.0" x2="1215.0" y2="1072.0" stroke="#f4f5f7" stroke-width="5.5" stroke-linecap="butt"/><line x1="1211.6" y1="995.0" x2="1212.6" y2="1072.0" stroke="#9c9ea2" stroke-width="1.6" stroke-linecap="butt"/><line x1="1216.6" y1="995.0" x2="1217.6" y2="1072.0" stroke="#b8babe" stroke-width="1.2" stroke-linecap="butt"/><line x1="1224.0" y1="985.0" x2="1225.0" y2="1060.0" stroke="#f4f5f7" stroke-width="5.5" stroke-linecap="butt"/><line x1="1221.6" y1="985.0" x2="1222.6" y2="1060.0" stroke="#9c9ea2" stroke-width="1.6" stroke-linecap="butt"/><line x1="1226.6" y1="985.0" x2="1227.6" y2="1060.0" stroke="#b8babe" stroke-width="1.2" stroke-linecap="butt"/><line x1="1233.0" y1="983.0" x2="1234.0" y2="1062.0" stroke="#f4f5f7" stroke-width="5.5" stroke-linecap="butt"/><line x1="1230.6" y1="983.0" x2="1231.6" y2="1062.0" stroke="#9c9ea2" stroke-width="1.6" stroke-linecap="butt"/><line x1="1235.6" y1="983.0" x2="1236.6" y2="1062.0" stroke="#b8babe" stroke-width="1.2" stroke-linecap="butt"/><line x1="1240.0" y1="983.0" x2="1241.0" y2="1058.0" stroke="#f4f5f7" stroke-width="5.5" stroke-linecap="butt"/><line x1="1237.6" y1="983.0" x2="1238.6" y2="1058.0" stroke="#9c9ea2" stroke-width="1.6" stroke-linecap="butt"/><line x1="1242.6" y1="983.0" x2="1243.6" y2="1058.0" stroke="#b8babe" stroke-width="1.2" stroke-linecap="butt"/><line x1="1248.0" y1="974.0" x2="1249.0" y2="1050.0" stroke="#f4f5f7" stroke-width="5.5" stroke-linecap="butt"/><line x1="1245.6" y1="974.0" x2="1246.6" y2="1050.0" stroke="#9c9ea2" stroke-width="1.6" stroke-linecap="butt"/><line x1="1250.6" y1="974.0" x2="1251.6" y2="1050.0" stroke="#b8babe" stroke-width="1.2" stroke-linecap="butt"/><line x1="1256.0" y1="972.0" x2="1257.0" y2="1050.0" stroke="#f4f5f7" stroke-width="5.5" stroke-linecap="butt"/><line x1="1253.6" y1="972.0" x2="1254.6" y2="1050.0" stroke="#9c9ea2" stroke-width="1.6" stroke-linecap="butt"/><line x1="1258.6" y1="972.0" x2="1259.6" y2="1050.0" stroke="#b8babe" stroke-width="1.2" stroke-linecap="butt"/><line x1="1265.0" y1="972.0" x2="1266.0" y2="1045.0" stroke="#f4f5f7" stroke-width="5.5" stroke-linecap="butt"/><line x1="1262.6" y1="972.0" x2="1263.6" y2="1045.0" stroke="#9c9ea2" stroke-width="1.6" stroke-linecap="butt"/><line x1="1267.6" y1="972.0" x2="1268.6" y2="1045.0" stroke="#b8babe" stroke-width="1.2" stroke-linecap="butt"/><line x1="1287.0" y1="960.0" x2="1288.0" y2="1026.0" stroke="#f4f5f7" stroke-width="5.5" stroke-linecap="butt"/><line x1="1284.6" y1="960.0" x2="1285.6" y2="1026.0" stroke="#9c9ea2" stroke-width="1.6" stroke-linecap="butt"/><line x1="1289.6" y1="960.0" x2="1290.6" y2="1026.0" stroke="#b8babe" stroke-width="1.2" stroke-linecap="butt"/><line x1="1294.0" y1="958.0" x2="1295.0" y2="1028.0" stroke="#f4f5f7" stroke-width="5.5" stroke-linecap="butt"/><line x1="1291.6" y1="958.0" x2="1292.6" y2="1028.0" stroke="#9c9ea2" stroke-width="1.6" stroke-linecap="butt"/><line x1="1296.6" y1="958.0" x2="1297.6" y2="1028.0" stroke="#b8babe" stroke-width="1.2" stroke-linecap="butt"/><line x1="1302.0" y1="958.0" x2="1303.0" y2="1024.0" stroke="#f4f5f7" stroke-width="5.5" stroke-linecap="butt"/><line x1="1299.6" y1="958.0" x2="1300.6" y2="1024.0" stroke="#9c9ea2" stroke-width="1.6" stroke-linecap="butt"/><line x1="1304.6" y1="958.0" x2="1305.6" y2="1024.0" stroke="#b8babe" stroke-width="1.2" stroke-linecap="butt"/><line x1="1320.0" y1="947.0" x2="1321.0" y2="1010.0" stroke="#f4f5f7" stroke-width="5.5" stroke-linecap="butt"/><line x1="1317.6" y1="947.0" x2="1318.6" y2="1010.0" stroke="#9c9ea2" stroke-width="1.6" stroke-linecap="butt"/><line x1="1322.6" y1="947.0" x2="1323.6" y2="1010.0" stroke="#b8babe" stroke-width="1.2" stroke-linecap="butt"/><line x1="1327.0" y1="945.0" x2="1328.0" y2="1012.0" stroke="#f4f5f7" stroke-width="5.5" stroke-linecap="butt"/><line x1="1324.6" y1="945.0" x2="1325.6" y2="1012.0" stroke="#9c9ea2" stroke-width="1.6" stroke-linecap="butt"/><line x1="1329.6" y1="945.0" x2="1330.6" y2="1012.0" stroke="#b8babe" stroke-width="1.2" stroke-linecap="butt"/><line x1="1335.0" y1="945.0" x2="1336.0" y2="1006.0" stroke="#f4f5f7" stroke-width="5.5" stroke-linecap="butt"/><line x1="1332.6" y1="945.0" x2="1333.6" y2="1006.0" stroke="#9c9ea2" stroke-width="1.6" stroke-linecap="butt"/><line x1="1337.6" y1="945.0" x2="1338.6" y2="1006.0" stroke="#b8babe" stroke-width="1.2" stroke-linecap="butt"/><path d="M720.6 1001.6 L870.6 984.5 L915.8 951.6 L1173.9 909.7 L1338.4 938.7 L977.1 1067.7 Z" fill="#7b7b7d" stroke="none" stroke-width="0"/><path d="M725.5 1006.5 L977.1 1072.6 L977.1 1079.4 L725.5 1012.9 Z" fill="#eceef0" stroke="none" stroke-width="0"/><path d="M720.6 1001.6 L977.1 1067.7 L977.1 1072.6 L720.6 1006.5 Z" fill="#c9cbcf" stroke="none" stroke-width="0"/><path d="M977.1 1067.7 L1338.4 938.7 L1338.4 944.5 L977.1 1074.8 Z" fill="#5a5c60" stroke="none" stroke-width="0"/><path d="M975.2 1071.0 L986.8 1066.8 L986.8 1074.8 L975.2 1079.0 Z" fill="#5e6064" stroke="none" stroke-width="0"/><path d="M1054.6 1042.6 L1066.3 1038.4 L1066.3 1046.5 L1054.6 1050.6 Z" fill="#5e6064" stroke="none" stroke-width="0"/><path d="M1126.9 1016.8 L1138.5 1012.6 L1138.5 1020.6 L1126.9 1024.8 Z" fill="#5e6064" stroke="none" stroke-width="0"/><path d="M1166.6 1002.6 L1178.3 998.4 L1178.3 1006.5 L1166.6 1010.6 Z" fill="#5e6064" stroke="none" stroke-width="0"/><path d="M1199.2 991.0 L1210.8 986.8 L1210.8 994.8 L1199.2 999.0 Z" fill="#5e6064" stroke="none" stroke-width="0"/><path d="M1228.1 980.6 L1239.7 976.5 L1239.7 984.5 L1228.1 988.7 Z" fill="#5e6064" stroke="none" stroke-width="0"/><path d="M1260.6 969.0 L1272.2 964.8 L1272.2 972.9 L1260.6 977.1 Z" fill="#5e6064" stroke="none" stroke-width="0"/><path d="M1300.3 954.8 L1311.9 950.6 L1311.9 958.7 L1300.3 962.9 Z" fill="#5e6064" stroke="none" stroke-width="0"/><path d="M1329.2 944.5 L1340.8 940.3 L1340.8 948.4 L1329.2 952.6 Z" fill="#5e6064" stroke="none" stroke-width="0"/><path d="M749.7 1014.5 L769.0 1019.4 L769.0 1022.3 L749.7 1017.4 Z" fill="#6e7074" stroke="none" stroke-width="0"/><path d="M801.3 1027.4 L820.6 1032.3 L820.6 1035.2 L801.3 1030.3 Z" fill="#6e7074" stroke="none" stroke-width="0"/><path d="M906.1 1058.1 L925.5 1062.9 L925.5 1065.8 L906.1 1061.0 Z" fill="#6e7074" stroke="none" stroke-width="0"/><line x1="815.8" y1="909.7" x2="820.6" y2="929.0" stroke="#4a4c50" stroke-width="2.8" stroke-linecap="butt"/><line x1="843.2" y1="912.9" x2="848.1" y2="932.3" stroke="#4a4c50" stroke-width="2.8" stroke-linecap="butt"/><line x1="1109.4" y1="906.5" x2="1111.0" y2="961.3" stroke="#4a4c50" stroke-width="2.8" stroke-linecap="butt"/><line x1="1154.5" y1="896.8" x2="1156.1" y2="945.2" stroke="#4a4c50" stroke-width="2.8" stroke-linecap="butt"/><line x1="1093.2" y1="912.9" x2="1091.6" y2="941.9" stroke="#4a4c50" stroke-width="2.8" stroke-linecap="butt"/><line x1="1190.0" y1="890.3" x2="1190.0" y2="929.0" stroke="#4a4c50" stroke-width="2.8" stroke-linecap="butt"/><path d="M711.0 948.4 L898.1 929.0 L915.8 906.5 L1128.7 893.5 L1173.9 885.5 L1336.8 900.0 L967.4 1001.6 Z" fill="#7b7b7d" stroke="none" stroke-width="0"/><path d="M711.0 948.4 L967.4 1001.6 L967.4 1005.2 L711.0 951.6 Z" fill="#9ca0a6" stroke="none" stroke-width="0"/><path d="M967.4 1001.6 L1336.8 900.0 L1336.8 903.2 L967.4 1004.8 Z" fill="#686c72" stroke="none" stroke-width="0"/><path d="M706.1 893.5 L898.1 874.2 L1051.9 890.3 L1125.5 888.1 L1128.4 849.7 L1333.5 860.6 L961.0 929.0 Z" fill="#7b7b7d" stroke="none" stroke-width="0"/><path d="M706.1 893.5 L961.0 929.0 L961.0 932.3 L706.1 896.5 Z" fill="#9ca0a6" stroke="none" stroke-width="0"/><path d="M961.0 929.0 L1333.5 860.6 L1333.5 864.5 L961.0 932.9 Z" fill="#505256" stroke="none" stroke-width="0"/><line x1="702.9" y1="891.9" x2="725.5" y2="1000.0" stroke="#3c3e42" stroke-width="3.4" stroke-linecap="butt"/><line x1="731.9" y1="896.8" x2="759.4" y2="1006.5" stroke="#3c3e42" stroke-width="3.4" stroke-linecap="butt"/><line x1="796.5" y1="906.5" x2="819.0" y2="1022.6" stroke="#3c3e42" stroke-width="3.4" stroke-linecap="butt"/><line x1="869.0" y1="917.7" x2="886.8" y2="1040.3" stroke="#3c3e42" stroke-width="3.4" stroke-linecap="butt"/><line x1="961.0" y1="929.0" x2="975.5" y2="1062.9" stroke="#3c3e42" stroke-width="3.4" stroke-linecap="butt"/><line x1="1057.7" y1="916.1" x2="1065.8" y2="1030.6" stroke="#3c3e42" stroke-width="3.4" stroke-linecap="butt"/><line x1="1133.5" y1="900.0" x2="1138.4" y2="1006.5" stroke="#3c3e42" stroke-width="3.4" stroke-linecap="butt"/><line x1="1169.0" y1="893.5" x2="1172.3" y2="993.5" stroke="#3c3e42" stroke-width="3.4" stroke-linecap="butt"/><line x1="1201.3" y1="887.1" x2="1202.9" y2="983.9" stroke="#3c3e42" stroke-width="3.4" stroke-linecap="butt"/><line x1="1228.7" y1="882.3" x2="1230.3" y2="974.2" stroke="#3c3e42" stroke-width="3.4" stroke-linecap="butt"/><line x1="1256.1" y1="877.4" x2="1257.7" y2="964.5" stroke="#3c3e42" stroke-width="3.4" stroke-linecap="butt"/><line x1="1296.5" y1="869.4" x2="1296.5" y2="951.6" stroke="#3c3e42" stroke-width="3.4" stroke-linecap="butt"/><line x1="1330.3" y1="862.9" x2="1330.3" y2="941.9" stroke="#3c3e42" stroke-width="3.4" stroke-linecap="butt"/><line x1="973.9" y1="951.6" x2="1012.6" y2="921.0" stroke="#3c3e42" stroke-width="2.4" stroke-linecap="butt"/><line x1="1012.6" y1="921.0" x2="1054.5" y2="935.5" stroke="#3c3e42" stroke-width="2.4" stroke-linecap="butt"/><line x1="973.9" y1="1006.5" x2="999.7" y2="993.5" stroke="#3c3e42" stroke-width="2.4" stroke-linecap="butt"/><line x1="1031.9" y1="980.6" x2="1057.7" y2="990.3" stroke="#3c3e42" stroke-width="2.4" stroke-linecap="butt"/><line x1="1180.3" y1="906.5" x2="1206.1" y2="890.3" stroke="#3c3e42" stroke-width="2.4" stroke-linecap="butt"/><line x1="1206.1" y1="890.3" x2="1225.5" y2="898.4" stroke="#3c3e42" stroke-width="2.4" stroke-linecap="butt"/><line x1="870.6" y1="922.6" x2="896.5" y2="932.3" stroke="#3c3e42" stroke-width="2.4" stroke-linecap="butt"/><line x1="896.5" y1="932.3" x2="915.8" y2="925.8" stroke="#3c3e42" stroke-width="2.4" stroke-linecap="butt"/><line x1="1123.3" y1="904.6" x2="1124.2" y2="923.4" stroke="#45474c" stroke-width="2.4" stroke-linecap="butt"/><line x1="1154.3" y1="899.0" x2="1155.3" y2="917.8" stroke="#45474c" stroke-width="2.4" stroke-linecap="butt"/><line x1="1090.3" y1="912.1" x2="1091.2" y2="931.0" stroke="#45474c" stroke-width="2.4" stroke-linecap="butt"/><line x1="1179.8" y1="895.2" x2="1180.7" y2="912.1" stroke="#45474c" stroke-width="2.4" stroke-linecap="butt"/><line x1="1125.1" y1="959.2" x2="1127.0" y2="968.6" stroke="#45474c" stroke-width="2.4" stroke-linecap="butt"/><line x1="1093.1" y1="968.6" x2="1094.1" y2="980.0" stroke="#45474c" stroke-width="2.4" stroke-linecap="butt"/><line x1="1155.3" y1="951.7" x2="1156.2" y2="961.1" stroke="#45474c" stroke-width="2.4" stroke-linecap="butt"/><line x1="1181.6" y1="947.9" x2="1191.0" y2="940.4" stroke="#45474c" stroke-width="2.2" stroke-linecap="butt"/><line x1="1213.7" y1="934.7" x2="1225.0" y2="940.4" stroke="#45474c" stroke-width="2.2" stroke-linecap="butt"/><line x1="832.0" y1="975.0" x2="833.0" y2="984.0" stroke="#45474c" stroke-width="2.2" stroke-linecap="butt"/><line x1="860.0" y1="979.0" x2="861.0" y2="989.0" stroke="#45474c" stroke-width="2.2" stroke-linecap="butt"/><line x1="925.0" y1="985.0" x2="926.0" y2="995.0" stroke="#45474c" stroke-width="2.2" stroke-linecap="butt"/><line x1="1085.0" y1="928.0" x2="1115.0" y2="929.0" stroke="#a8acb2" stroke-width="1.6" stroke-linecap="butt"/><line x1="1195.0" y1="960.0" x2="1215.0" y2="961.0" stroke="#a8acb2" stroke-width="1.6" stroke-linecap="butt"/><line x1="1240.0" y1="930.0" x2="1262.0" y2="931.0" stroke="#a8acb2" stroke-width="1.6" stroke-linecap="butt"/><line x1="909.4" y1="875.8" x2="1048.1" y2="890.3" stroke="#a0a2a6" stroke-width="1.8" stroke-linecap="butt"/><line x1="920.7" y1="836.4" x2="923.6" y2="874.3" stroke="#55575c" stroke-width="2.6" stroke-linecap="butt"/><line x1="953.2" y1="837.8" x2="957.5" y2="871.5" stroke="#55575c" stroke-width="2.6" stroke-linecap="butt"/><line x1="961.0" y1="838.5" x2="964.5" y2="870.1" stroke="#55575c" stroke-width="2.6" stroke-linecap="butt"/><line x1="979.4" y1="839.2" x2="982.9" y2="880.0" stroke="#55575c" stroke-width="2.6" stroke-linecap="butt"/><line x1="990.0" y1="840.0" x2="992.8" y2="868.7" stroke="#55575c" stroke-width="2.6" stroke-linecap="butt"/><line x1="1020.3" y1="842.1" x2="1022.4" y2="882.8" stroke="#55575c" stroke-width="2.6" stroke-linecap="butt"/><line x1="1031.6" y1="842.8" x2="1033.7" y2="863.0" stroke="#55575c" stroke-width="2.6" stroke-linecap="butt"/><line x1="1047.1" y1="843.5" x2="1050.0" y2="885.6" stroke="#55575c" stroke-width="2.6" stroke-linecap="butt"/><line x1="1056.3" y1="844.2" x2="1059.2" y2="875.7" stroke="#55575c" stroke-width="2.6" stroke-linecap="butt"/><line x1="1086.0" y1="844.9" x2="1088.8" y2="881.4" stroke="#55575c" stroke-width="2.6" stroke-linecap="butt"/><line x1="1106.5" y1="846.3" x2="1110.7" y2="891.3" stroke="#55575c" stroke-width="2.6" stroke-linecap="butt"/><line x1="1121.3" y1="847.0" x2="1124.1" y2="875.7" stroke="#55575c" stroke-width="2.6" stroke-linecap="butt"/><line x1="926.4" y1="852.4" x2="1001.2" y2="857.4" stroke="#9ea2a8" stroke-width="1.5" stroke-linecap="butt"/><line x1="987.1" y1="870.1" x2="1083.2" y2="875.7" stroke="#3a3c40" stroke-width="2.0" stroke-linecap="butt"/><line x1="1006.9" y1="863.0" x2="1032.3" y2="864.4" stroke="#a4a8ae" stroke-width="1.4" stroke-linecap="butt"/><line x1="1060.6" y1="866.6" x2="1086.0" y2="868.7" stroke="#a4a8ae" stroke-width="1.4" stroke-linecap="butt"/><line x1="1161.0" y1="843.5" x2="1159.4" y2="877.4" stroke="#44464a" stroke-width="2.4" stroke-linecap="butt"/><line x1="1194.8" y1="838.7" x2="1193.2" y2="875.8" stroke="#44464a" stroke-width="2.4" stroke-linecap="butt"/><line x1="1225.5" y1="835.5" x2="1223.9" y2="866.1" stroke="#44464a" stroke-width="2.4" stroke-linecap="butt"/><line x1="1252.9" y1="832.3" x2="1252.9" y2="862.9" stroke="#44464a" stroke-width="2.4" stroke-linecap="butt"/><path d="M875.5 832.3 L1028.7 824.2 L1265.8 833.9 L1123.9 848.4 Z" fill="#7a7a7c" stroke="none" stroke-width="0"/><path d="M875.5 832.3 L1123.9 848.4 L1123.9 850.6 L875.5 834.2 Z" fill="#8e9298" stroke="none" stroke-width="0"/><path d="M1123.9 848.4 L1265.8 833.9 L1265.8 837.1 L1123.9 851.6 Z" fill="#3a3c40" stroke="none" stroke-width="0"/></svg>
<svg style="position:absolute;left:400px;top:1100px;" width="230" height="140" viewBox="0 0 230 140"><defs><radialGradient id="rg" cx="50%" cy="50%" r="50%"><stop offset="0.7" stop-color="#f2f3f5"/><stop offset="0.78" stop-color="#d4d7db"/><stop offset="1" stop-color="#e4e7ea" stop-opacity="0"/></radialGradient></defs><defs><filter id="bl" x="-20%" y="-50%" width="140%" height="200%"><feGaussianBlur stdDeviation="3"/></filter></defs><g filter="url(#bl)"><ellipse cx="125.5" cy="95" rx="94" ry="25" fill="#d5d8dc"/><ellipse cx="125.5" cy="93" rx="70" ry="14" fill="#f1f3f5"/></g><path d="M71.8 19.5 L111.8 0.6 L177.8 12.2 L137.2 30.4 Z" fill="#eceef0" stroke="#777" stroke-width="1.3"/><path d="M71.8 19.5 L137.2 30.4 L137.2 104.4 L71.8 92.8 Z" fill="#e6e7e9" stroke="#777" stroke-width="1.3"/><path d="M137.2 30.4 L177.8 12.2 L177.8 86.3 L137.2 104.4 Z" fill="#e3e4e6" stroke="#777" stroke-width="1.3"/><rect x="84" y="38" width="42" height="50" fill="#d9dadc"/><text x="82" y="67" font-family="Liberation Sans" font-weight="bold" font-size="14" fill="#2a2a2a" transform="rotate(6 104 62)">FRONT</text><text x="145" y="64" font-family="Liberation Sans" font-weight="bold" font-size="13" fill="#2a2a2a" transform="skewY(-22) translate(0 58)" textLength="28">RIGHT</text><text x="112" y="20" font-family="Liberation Sans" font-size="8" fill="#555" transform="rotate(12 122 17)">TOP</text></svg>
<svg style="position:absolute;left:470px;top:1228px;" width="24" height="12" viewBox="0 0 24 12"><circle cx="12" cy="13" r="11" fill="#c8262c"/></svg>
</body></html>
